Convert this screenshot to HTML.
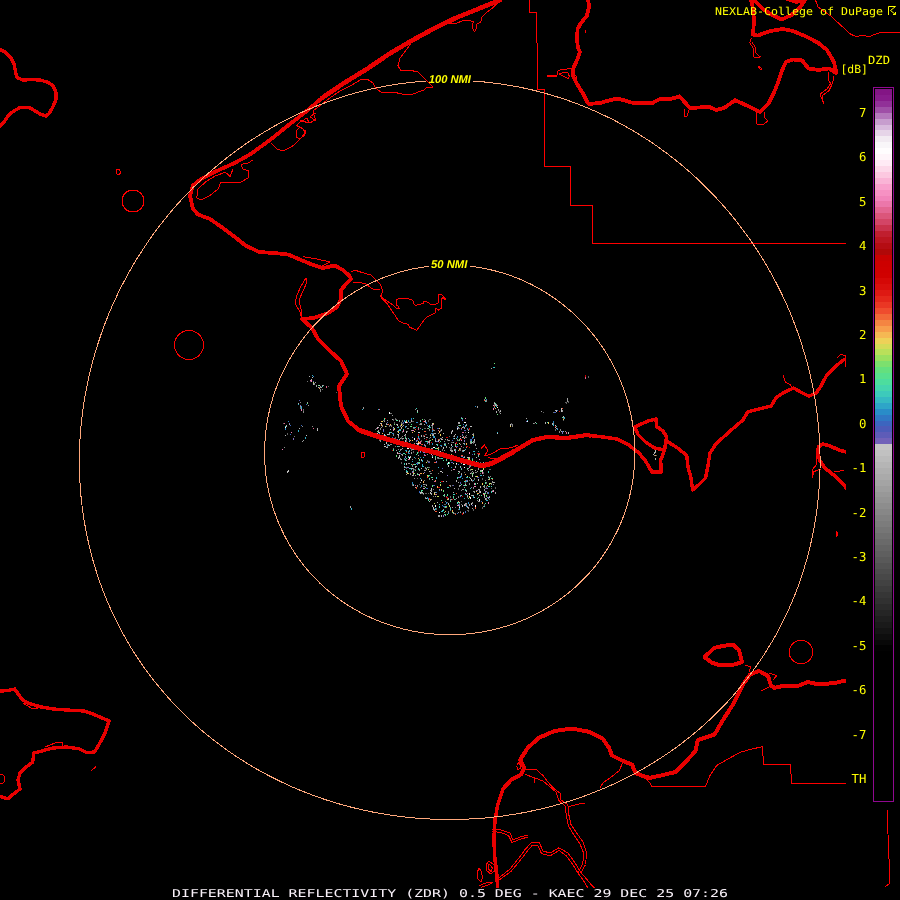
<!DOCTYPE html>
<html><head><meta charset="utf-8"><title>DIFFERENTIAL REFLECTIVITY (ZDR)</title>
<style>
html,body{margin:0;padding:0;background:#000;overflow:hidden}
svg{display:block}
text{font-family:"DejaVu Sans Mono","Liberation Mono",monospace;text-rendering:geometricPrecision;shape-rendering:crispEdges}
svg{will-change:transform}
.lab{font-size:12.3px;fill:#ffff00}
.ring{font-family:"Liberation Sans",sans-serif;font-weight:bold;font-style:italic;font-size:11.4px;fill:#ffff00}
</style></head><body>
<svg width="900" height="900" viewBox="0 0 900 900">
<rect width="900" height="900" fill="#000"/>
<g id="speck" shape-rendering="crispEdges">
<rect x="429" y="471" width="2" height="1" fill="#707070"/>
<rect x="429" y="427" width="2" height="1" fill="#30b0c8"/>
<rect x="379" y="432" width="1" height="2" fill="#c0c0c0"/>
<rect x="413" y="474" width="1" height="2" fill="#a0a0a0"/>
<rect x="424" y="470" width="1" height="1" fill="#888888"/>
<rect x="469" y="466" width="1" height="1" fill="#707070"/>
<rect x="422" y="419" width="1" height="1" fill="#68e078"/>
<rect x="495" y="492" width="1" height="2" fill="#a0a0a0"/>
<rect x="384" y="418" width="1" height="2" fill="#50e098"/>
<rect x="465" y="425" width="1" height="2" fill="#30b0c8"/>
<rect x="425" y="434" width="2" height="1" fill="#606060"/>
<rect x="398" y="453" width="1" height="1" fill="#e06088"/>
<rect x="377" y="427" width="2" height="1" fill="#c0c0c0"/>
<rect x="414" y="443" width="1" height="1" fill="#c0c0c0"/>
<rect x="446" y="437" width="2" height="1" fill="#d00000"/>
<rect x="448" y="443" width="1" height="1" fill="#989898"/>
<rect x="424" y="438" width="1" height="1" fill="#888888"/>
<rect x="439" y="515" width="1" height="2" fill="#a0a0a0"/>
<rect x="488" y="486" width="2" height="1" fill="#40d0b8"/>
<rect x="453" y="463" width="1" height="1" fill="#c0c0c0"/>
<rect x="429" y="450" width="1" height="2" fill="#989898"/>
<rect x="462" y="496" width="1" height="1" fill="#d00000"/>
<rect x="459" y="507" width="1" height="1" fill="#ffffff"/>
<rect x="482" y="472" width="1" height="2" fill="#f080b8"/>
<rect x="484" y="489" width="1" height="2" fill="#989898"/>
<rect x="446" y="458" width="2" height="1" fill="#606060"/>
<rect x="433" y="436" width="2" height="1" fill="#50e098"/>
<rect x="456" y="463" width="1" height="2" fill="#a0a0a0"/>
<rect x="402" y="454" width="1" height="2" fill="#989898"/>
<rect x="474" y="491" width="1" height="2" fill="#a0a0a0"/>
<rect x="398" y="426" width="1" height="1" fill="#606060"/>
<rect x="463" y="512" width="1" height="1" fill="#a0a0a0"/>
<rect x="429" y="441" width="1" height="2" fill="#b0b0b0"/>
<rect x="429" y="419" width="2" height="1" fill="#606060"/>
<rect x="445" y="444" width="1" height="2" fill="#40d0b8"/>
<rect x="402" y="426" width="1" height="1" fill="#989898"/>
<rect x="429" y="478" width="1" height="2" fill="#40d0b8"/>
<rect x="468" y="468" width="1" height="1" fill="#a0a0a0"/>
<rect x="471" y="469" width="2" height="1" fill="#c8e058"/>
<rect x="480" y="486" width="1" height="2" fill="#b0b0b0"/>
<rect x="421" y="459" width="1" height="2" fill="#c0c0c0"/>
<rect x="476" y="448" width="1" height="1" fill="#a0a0a0"/>
<rect x="464" y="498" width="1" height="1" fill="#30b0c8"/>
<rect x="403" y="453" width="2" height="1" fill="#888888"/>
<rect x="425" y="441" width="1" height="1" fill="#2888c8"/>
<rect x="440" y="484" width="1" height="2" fill="#c8e058"/>
<rect x="460" y="512" width="1" height="1" fill="#989898"/>
<rect x="469" y="458" width="1" height="2" fill="#f8a850"/>
<rect x="457" y="513" width="1" height="1" fill="#3868c0"/>
<rect x="410" y="426" width="2" height="1" fill="#68e078"/>
<rect x="383" y="429" width="1" height="2" fill="#8070c0"/>
<rect x="489" y="496" width="1" height="2" fill="#a0a0a0"/>
<rect x="435" y="448" width="2" height="1" fill="#50e098"/>
<rect x="412" y="432" width="1" height="1" fill="#68e078"/>
<rect x="376" y="428" width="1" height="1" fill="#888888"/>
<rect x="464" y="437" width="1" height="2" fill="#b0b0b0"/>
<rect x="446" y="502" width="1" height="2" fill="#2888c8"/>
<rect x="439" y="458" width="2" height="1" fill="#707070"/>
<rect x="392" y="433" width="2" height="1" fill="#2888c8"/>
<rect x="489" y="478" width="1" height="1" fill="#a0a0a0"/>
<rect x="449" y="506" width="1" height="1" fill="#606060"/>
<rect x="405" y="422" width="2" height="1" fill="#ffffff"/>
<rect x="423" y="484" width="2" height="1" fill="#a0a0a0"/>
<rect x="459" y="508" width="1" height="2" fill="#30b0c8"/>
<rect x="436" y="492" width="1" height="1" fill="#2888c8"/>
<rect x="469" y="477" width="1" height="1" fill="#50e098"/>
<rect x="396" y="424" width="1" height="1" fill="#a0a0a0"/>
<rect x="431" y="493" width="1" height="2" fill="#b0b0b0"/>
<rect x="437" y="457" width="1" height="1" fill="#989898"/>
<rect x="430" y="490" width="2" height="1" fill="#a0a0a0"/>
<rect x="474" y="486" width="2" height="1" fill="#f080b8"/>
<rect x="448" y="465" width="1" height="2" fill="#c0c0c0"/>
<rect x="467" y="428" width="1" height="1" fill="#2888c8"/>
<rect x="484" y="485" width="1" height="2" fill="#50e098"/>
<rect x="398" y="431" width="1" height="2" fill="#f0d058"/>
<rect x="399" y="455" width="1" height="2" fill="#c0c0c0"/>
<rect x="385" y="437" width="1" height="1" fill="#707070"/>
<rect x="469" y="480" width="1" height="1" fill="#888888"/>
<rect x="407" y="448" width="2" height="1" fill="#ffffff"/>
<rect x="453" y="497" width="1" height="2" fill="#707070"/>
<rect x="432" y="429" width="2" height="1" fill="#707070"/>
<rect x="425" y="467" width="1" height="2" fill="#888888"/>
<rect x="463" y="443" width="2" height="1" fill="#a0a0a0"/>
<rect x="377" y="428" width="1" height="1" fill="#f080b8"/>
<rect x="486" y="491" width="1" height="1" fill="#989898"/>
<rect x="426" y="462" width="1" height="1" fill="#707070"/>
<rect x="491" y="488" width="1" height="1" fill="#606060"/>
<rect x="446" y="456" width="1" height="1" fill="#2888c8"/>
<rect x="465" y="437" width="2" height="1" fill="#888888"/>
<rect x="451" y="450" width="1" height="2" fill="#989898"/>
<rect x="468" y="432" width="1" height="1" fill="#989898"/>
<rect x="379" y="440" width="1" height="1" fill="#707070"/>
<rect x="381" y="421" width="1" height="1" fill="#f8a850"/>
<rect x="452" y="451" width="1" height="1" fill="#a0a0a0"/>
<rect x="426" y="439" width="1" height="1" fill="#d00000"/>
<rect x="413" y="470" width="1" height="2" fill="#50e098"/>
<rect x="413" y="469" width="1" height="2" fill="#707070"/>
<rect x="476" y="461" width="1" height="1" fill="#40d0b8"/>
<rect x="449" y="485" width="1" height="1" fill="#f05030"/>
<rect x="456" y="446" width="1" height="2" fill="#f05030"/>
<rect x="428" y="475" width="1" height="2" fill="#68e078"/>
<rect x="430" y="435" width="1" height="1" fill="#c8e058"/>
<rect x="446" y="496" width="1" height="2" fill="#d00000"/>
<rect x="441" y="500" width="1" height="1" fill="#50e098"/>
<rect x="469" y="505" width="1" height="1" fill="#c0c0c0"/>
<rect x="467" y="480" width="1" height="2" fill="#a0a0a0"/>
<rect x="469" y="467" width="1" height="1" fill="#f080b8"/>
<rect x="458" y="464" width="1" height="1" fill="#3868c0"/>
<rect x="457" y="502" width="1" height="2" fill="#40d0b8"/>
<rect x="439" y="487" width="1" height="1" fill="#b0b0b0"/>
<rect x="403" y="429" width="1" height="1" fill="#50e098"/>
<rect x="398" y="457" width="1" height="2" fill="#c0c0c0"/>
<rect x="411" y="424" width="1" height="1" fill="#50e098"/>
<rect x="433" y="496" width="1" height="1" fill="#a0a0a0"/>
<rect x="417" y="474" width="2" height="1" fill="#50e098"/>
<rect x="437" y="458" width="1" height="1" fill="#606060"/>
<rect x="452" y="511" width="1" height="2" fill="#68e078"/>
<rect x="415" y="470" width="1" height="1" fill="#50e098"/>
<rect x="423" y="435" width="1" height="2" fill="#606060"/>
<rect x="471" y="495" width="1" height="1" fill="#a0a0a0"/>
<rect x="429" y="438" width="1" height="1" fill="#606060"/>
<rect x="425" y="493" width="2" height="1" fill="#606060"/>
<rect x="391" y="425" width="1" height="2" fill="#707070"/>
<rect x="439" y="506" width="1" height="2" fill="#40d0b8"/>
<rect x="447" y="502" width="1" height="1" fill="#606060"/>
<rect x="439" y="428" width="1" height="1" fill="#f0d058"/>
<rect x="411" y="420" width="1" height="2" fill="#b0b0b0"/>
<rect x="463" y="450" width="1" height="2" fill="#30b0c8"/>
<rect x="422" y="460" width="1" height="2" fill="#30b0c8"/>
<rect x="481" y="501" width="1" height="1" fill="#3868c0"/>
<rect x="409" y="451" width="1" height="1" fill="#f0d058"/>
<rect x="468" y="470" width="1" height="1" fill="#a0a0a0"/>
<rect x="420" y="423" width="2" height="1" fill="#888888"/>
<rect x="432" y="479" width="1" height="1" fill="#c0c0c0"/>
<rect x="452" y="430" width="1" height="2" fill="#c0c0c0"/>
<rect x="401" y="428" width="1" height="1" fill="#b0b0b0"/>
<rect x="398" y="427" width="1" height="1" fill="#50e098"/>
<rect x="489" y="478" width="1" height="2" fill="#3868c0"/>
<rect x="439" y="439" width="1" height="2" fill="#888888"/>
<rect x="414" y="443" width="1" height="1" fill="#989898"/>
<rect x="404" y="469" width="1" height="1" fill="#a0a0a0"/>
<rect x="467" y="507" width="1" height="1" fill="#a0a0a0"/>
<rect x="459" y="450" width="1" height="1" fill="#d00000"/>
<rect x="492" y="481" width="1" height="2" fill="#989898"/>
<rect x="488" y="477" width="1" height="1" fill="#40d0b8"/>
<rect x="438" y="439" width="1" height="1" fill="#f05030"/>
<rect x="457" y="427" width="1" height="1" fill="#3868c0"/>
<rect x="432" y="455" width="1" height="2" fill="#e06088"/>
<rect x="468" y="463" width="1" height="2" fill="#ffffff"/>
<rect x="387" y="424" width="2" height="1" fill="#f05030"/>
<rect x="450" y="457" width="1" height="1" fill="#606060"/>
<rect x="484" y="504" width="1" height="2" fill="#606060"/>
<rect x="441" y="481" width="2" height="1" fill="#d00000"/>
<rect x="425" y="497" width="1" height="2" fill="#989898"/>
<rect x="444" y="507" width="1" height="1" fill="#606060"/>
<rect x="403" y="443" width="1" height="2" fill="#c0c0c0"/>
<rect x="486" y="498" width="1" height="2" fill="#888888"/>
<rect x="411" y="464" width="1" height="1" fill="#50e098"/>
<rect x="453" y="485" width="1" height="1" fill="#5058b8"/>
<rect x="455" y="444" width="1" height="2" fill="#68e078"/>
<rect x="463" y="426" width="1" height="2" fill="#8070c0"/>
<rect x="382" y="435" width="1" height="2" fill="#989898"/>
<rect x="397" y="431" width="1" height="1" fill="#989898"/>
<rect x="473" y="451" width="2" height="1" fill="#30b0c8"/>
<rect x="438" y="515" width="1" height="2" fill="#50e098"/>
<rect x="400" y="426" width="1" height="1" fill="#8070c0"/>
<rect x="428" y="467" width="2" height="1" fill="#707070"/>
<rect x="408" y="438" width="1" height="1" fill="#40d0b8"/>
<rect x="403" y="441" width="1" height="1" fill="#50e098"/>
<rect x="431" y="491" width="1" height="1" fill="#b0b0b0"/>
<rect x="454" y="450" width="2" height="1" fill="#30b0c8"/>
<rect x="467" y="468" width="1" height="1" fill="#50e098"/>
<rect x="449" y="436" width="1" height="1" fill="#606060"/>
<rect x="472" y="495" width="2" height="1" fill="#b0b0b0"/>
<rect x="448" y="487" width="1" height="1" fill="#50e098"/>
<rect x="435" y="458" width="1" height="1" fill="#606060"/>
<rect x="390" y="444" width="2" height="1" fill="#888888"/>
<rect x="466" y="494" width="1" height="1" fill="#50e098"/>
<rect x="455" y="466" width="1" height="2" fill="#b0b0b0"/>
<rect x="412" y="461" width="1" height="1" fill="#30b0c8"/>
<rect x="434" y="492" width="2" height="1" fill="#b0b0b0"/>
<rect x="410" y="456" width="1" height="2" fill="#c0c0c0"/>
<rect x="465" y="436" width="1" height="1" fill="#707070"/>
<rect x="425" y="421" width="1" height="1" fill="#888888"/>
<rect x="399" y="429" width="1" height="2" fill="#30b0c8"/>
<rect x="415" y="485" width="1" height="1" fill="#e06088"/>
<rect x="431" y="453" width="1" height="2" fill="#f080b8"/>
<rect x="472" y="434" width="2" height="1" fill="#a0a0a0"/>
<rect x="474" y="462" width="1" height="2" fill="#707070"/>
<rect x="469" y="462" width="1" height="2" fill="#989898"/>
<rect x="451" y="467" width="1" height="1" fill="#2888c8"/>
<rect x="385" y="418" width="1" height="1" fill="#d00000"/>
<rect x="470" y="488" width="1" height="1" fill="#40d0b8"/>
<rect x="479" y="459" width="1" height="1" fill="#f080b8"/>
<rect x="457" y="444" width="1" height="1" fill="#50e098"/>
<rect x="388" y="434" width="2" height="1" fill="#b0b0b0"/>
<rect x="460" y="466" width="1" height="2" fill="#b0b0b0"/>
<rect x="478" y="468" width="1" height="2" fill="#a0a0a0"/>
<rect x="438" y="449" width="1" height="1" fill="#888888"/>
<rect x="480" y="491" width="1" height="2" fill="#c0c0c0"/>
<rect x="460" y="482" width="1" height="2" fill="#5058b8"/>
<rect x="434" y="510" width="1" height="1" fill="#989898"/>
<rect x="416" y="487" width="1" height="2" fill="#f05030"/>
<rect x="474" y="462" width="2" height="1" fill="#606060"/>
<rect x="406" y="451" width="1" height="2" fill="#f0d058"/>
<rect x="464" y="505" width="1" height="1" fill="#c0c0c0"/>
<rect x="413" y="451" width="1" height="2" fill="#606060"/>
<rect x="485" y="480" width="1" height="1" fill="#888888"/>
<rect x="399" y="420" width="1" height="2" fill="#707070"/>
<rect x="459" y="440" width="1" height="1" fill="#b0b0b0"/>
<rect x="391" y="432" width="1" height="1" fill="#989898"/>
<rect x="435" y="480" width="1" height="2" fill="#f8a850"/>
<rect x="461" y="484" width="1" height="1" fill="#50e098"/>
<rect x="419" y="442" width="1" height="2" fill="#f8a850"/>
<rect x="402" y="438" width="2" height="1" fill="#a0a0a0"/>
<rect x="466" y="505" width="1" height="2" fill="#30b0c8"/>
<rect x="451" y="455" width="2" height="1" fill="#b0b0b0"/>
<rect x="466" y="485" width="1" height="1" fill="#989898"/>
<rect x="419" y="484" width="1" height="1" fill="#606060"/>
<rect x="479" y="499" width="1" height="2" fill="#ffffff"/>
<rect x="462" y="478" width="1" height="1" fill="#2888c8"/>
<rect x="420" y="482" width="1" height="1" fill="#a0a0a0"/>
<rect x="432" y="485" width="1" height="2" fill="#68e078"/>
<rect x="406" y="438" width="1" height="2" fill="#f080b8"/>
<rect x="463" y="424" width="1" height="1" fill="#888888"/>
<rect x="387" y="446" width="1" height="2" fill="#707070"/>
<rect x="393" y="419" width="1" height="2" fill="#606060"/>
<rect x="408" y="453" width="2" height="1" fill="#2888c8"/>
<rect x="421" y="485" width="1" height="2" fill="#2888c8"/>
<rect x="394" y="423" width="1" height="2" fill="#68e078"/>
<rect x="427" y="428" width="2" height="1" fill="#68e078"/>
<rect x="444" y="441" width="1" height="1" fill="#888888"/>
<rect x="382" y="433" width="1" height="1" fill="#f8a850"/>
<rect x="469" y="483" width="1" height="2" fill="#888888"/>
<rect x="450" y="499" width="1" height="1" fill="#a0a0a0"/>
<rect x="428" y="500" width="1" height="1" fill="#50e098"/>
<rect x="458" y="440" width="1" height="1" fill="#707070"/>
<rect x="405" y="437" width="1" height="2" fill="#50e098"/>
<rect x="411" y="468" width="1" height="2" fill="#30b0c8"/>
<rect x="423" y="486" width="1" height="1" fill="#707070"/>
<rect x="436" y="441" width="1" height="1" fill="#8070c0"/>
<rect x="411" y="419" width="1" height="1" fill="#3868c0"/>
<rect x="405" y="434" width="1" height="2" fill="#c0c0c0"/>
<rect x="388" y="444" width="1" height="1" fill="#888888"/>
<rect x="479" y="492" width="1" height="1" fill="#a0a0a0"/>
<rect x="446" y="446" width="1" height="2" fill="#a0a0a0"/>
<rect x="424" y="486" width="1" height="1" fill="#888888"/>
<rect x="458" y="512" width="1" height="1" fill="#a0a0a0"/>
<rect x="465" y="482" width="1" height="1" fill="#30b0c8"/>
<rect x="450" y="448" width="1" height="2" fill="#989898"/>
<rect x="466" y="490" width="1" height="2" fill="#b0b0b0"/>
<rect x="479" y="465" width="2" height="1" fill="#707070"/>
<rect x="413" y="468" width="1" height="2" fill="#888888"/>
<rect x="451" y="431" width="1" height="2" fill="#707070"/>
<rect x="468" y="507" width="1" height="2" fill="#a0a0a0"/>
<rect x="386" y="423" width="1" height="1" fill="#888888"/>
<rect x="415" y="466" width="2" height="1" fill="#a0a0a0"/>
<rect x="402" y="423" width="1" height="2" fill="#606060"/>
<rect x="408" y="456" width="1" height="2" fill="#40d0b8"/>
<rect x="450" y="507" width="1" height="1" fill="#989898"/>
<rect x="440" y="445" width="2" height="1" fill="#2888c8"/>
<rect x="415" y="445" width="1" height="2" fill="#68e078"/>
<rect x="431" y="425" width="2" height="1" fill="#888888"/>
<rect x="451" y="444" width="1" height="2" fill="#c0c0c0"/>
<rect x="483" y="493" width="1" height="2" fill="#c0c0c0"/>
<rect x="406" y="451" width="1" height="2" fill="#68e078"/>
<rect x="389" y="425" width="1" height="2" fill="#707070"/>
<rect x="454" y="435" width="1" height="2" fill="#a0a0a0"/>
<rect x="424" y="435" width="1" height="2" fill="#d00000"/>
<rect x="414" y="473" width="1" height="1" fill="#68e078"/>
<rect x="419" y="474" width="1" height="2" fill="#f080b8"/>
<rect x="407" y="422" width="1" height="1" fill="#e06088"/>
<rect x="418" y="451" width="1" height="1" fill="#d00000"/>
<rect x="457" y="428" width="1" height="2" fill="#a0a0a0"/>
<rect x="436" y="462" width="1" height="1" fill="#a0a0a0"/>
<rect x="478" y="480" width="1" height="1" fill="#30b0c8"/>
<rect x="478" y="466" width="1" height="1" fill="#606060"/>
<rect x="461" y="495" width="1" height="1" fill="#50e098"/>
<rect x="427" y="428" width="1" height="1" fill="#888888"/>
<rect x="443" y="515" width="1" height="1" fill="#30b0c8"/>
<rect x="380" y="437" width="2" height="1" fill="#c8e058"/>
<rect x="411" y="449" width="1" height="2" fill="#707070"/>
<rect x="385" y="426" width="1" height="1" fill="#c8e058"/>
<rect x="495" y="487" width="1" height="1" fill="#606060"/>
<rect x="420" y="443" width="1" height="1" fill="#f080b8"/>
<rect x="435" y="508" width="1" height="2" fill="#30b0c8"/>
<rect x="425" y="420" width="1" height="2" fill="#c0c0c0"/>
<rect x="434" y="481" width="2" height="1" fill="#e06088"/>
<rect x="452" y="440" width="1" height="1" fill="#5058b8"/>
<rect x="421" y="480" width="1" height="1" fill="#c0c0c0"/>
<rect x="411" y="468" width="2" height="1" fill="#b0b0b0"/>
<rect x="438" y="467" width="1" height="1" fill="#30b0c8"/>
<rect x="460" y="449" width="1" height="2" fill="#707070"/>
<rect x="419" y="443" width="1" height="1" fill="#e06088"/>
<rect x="412" y="464" width="1" height="1" fill="#d00000"/>
<rect x="447" y="497" width="1" height="2" fill="#d00000"/>
<rect x="400" y="438" width="1" height="1" fill="#a0a0a0"/>
<rect x="472" y="480" width="1" height="2" fill="#606060"/>
<rect x="442" y="510" width="2" height="1" fill="#40d0b8"/>
<rect x="491" y="491" width="1" height="2" fill="#40d0b8"/>
<rect x="433" y="447" width="1" height="1" fill="#40d0b8"/>
<rect x="472" y="458" width="1" height="2" fill="#f080b8"/>
<rect x="458" y="496" width="1" height="2" fill="#989898"/>
<rect x="381" y="424" width="1" height="2" fill="#f8a850"/>
<rect x="386" y="424" width="2" height="1" fill="#989898"/>
<rect x="384" y="446" width="1" height="1" fill="#c0c0c0"/>
<rect x="483" y="462" width="1" height="2" fill="#b0b0b0"/>
<rect x="435" y="458" width="1" height="1" fill="#50e098"/>
<rect x="442" y="502" width="1" height="1" fill="#f05030"/>
<rect x="455" y="451" width="1" height="2" fill="#f080b8"/>
<rect x="445" y="501" width="1" height="1" fill="#707070"/>
<rect x="413" y="485" width="1" height="1" fill="#888888"/>
<rect x="420" y="487" width="1" height="1" fill="#707070"/>
<rect x="443" y="515" width="1" height="2" fill="#8070c0"/>
<rect x="434" y="436" width="1" height="2" fill="#30b0c8"/>
<rect x="469" y="497" width="1" height="1" fill="#606060"/>
<rect x="399" y="433" width="1" height="1" fill="#3868c0"/>
<rect x="446" y="507" width="1" height="1" fill="#f05030"/>
<rect x="475" y="476" width="1" height="1" fill="#68e078"/>
<rect x="440" y="438" width="2" height="1" fill="#888888"/>
<rect x="406" y="442" width="1" height="1" fill="#707070"/>
<rect x="482" y="502" width="1" height="2" fill="#f8a850"/>
<rect x="461" y="474" width="1" height="1" fill="#b0b0b0"/>
<rect x="459" y="448" width="2" height="1" fill="#989898"/>
<rect x="442" y="472" width="1" height="1" fill="#c0c0c0"/>
<rect x="396" y="450" width="1" height="1" fill="#a0a0a0"/>
<rect x="493" y="482" width="2" height="1" fill="#b0b0b0"/>
<rect x="460" y="476" width="1" height="2" fill="#30b0c8"/>
<rect x="389" y="432" width="2" height="1" fill="#40d0b8"/>
<rect x="404" y="435" width="2" height="1" fill="#a0a0a0"/>
<rect x="450" y="510" width="1" height="1" fill="#707070"/>
<rect x="460" y="467" width="1" height="1" fill="#40d0b8"/>
<rect x="399" y="453" width="1" height="1" fill="#888888"/>
<rect x="400" y="453" width="1" height="1" fill="#5058b8"/>
<rect x="464" y="467" width="1" height="1" fill="#ffffff"/>
<rect x="397" y="434" width="1" height="1" fill="#a0a0a0"/>
<rect x="411" y="418" width="1" height="2" fill="#2888c8"/>
<rect x="457" y="436" width="1" height="2" fill="#2888c8"/>
<rect x="488" y="471" width="1" height="2" fill="#40d0b8"/>
<rect x="392" y="419" width="1" height="1" fill="#b0b0b0"/>
<rect x="463" y="512" width="1" height="2" fill="#a0a0a0"/>
<rect x="458" y="505" width="1" height="1" fill="#8070c0"/>
<rect x="419" y="424" width="1" height="1" fill="#606060"/>
<rect x="458" y="425" width="1" height="1" fill="#707070"/>
<rect x="407" y="467" width="2" height="1" fill="#8070c0"/>
<rect x="405" y="421" width="1" height="1" fill="#40d0b8"/>
<rect x="491" y="483" width="1" height="2" fill="#888888"/>
<rect x="444" y="443" width="1" height="2" fill="#3868c0"/>
<rect x="458" y="458" width="1" height="1" fill="#f0d058"/>
<rect x="415" y="429" width="1" height="1" fill="#f05030"/>
<rect x="480" y="471" width="2" height="1" fill="#68e078"/>
<rect x="467" y="429" width="2" height="1" fill="#707070"/>
<rect x="450" y="457" width="1" height="1" fill="#b0b0b0"/>
<rect x="458" y="477" width="2" height="1" fill="#8070c0"/>
<rect x="443" y="509" width="1" height="1" fill="#f05030"/>
<rect x="443" y="454" width="1" height="1" fill="#989898"/>
<rect x="433" y="423" width="1" height="2" fill="#c8e058"/>
<rect x="435" y="440" width="1" height="2" fill="#e06088"/>
<rect x="412" y="482" width="1" height="2" fill="#2888c8"/>
<rect x="489" y="484" width="1" height="1" fill="#68e078"/>
<rect x="450" y="508" width="1" height="2" fill="#40d0b8"/>
<rect x="392" y="439" width="1" height="1" fill="#b0b0b0"/>
<rect x="471" y="439" width="1" height="2" fill="#2888c8"/>
<rect x="465" y="418" width="1" height="1" fill="#f080b8"/>
<rect x="444" y="512" width="1" height="1" fill="#50e098"/>
<rect x="421" y="449" width="1" height="2" fill="#a0a0a0"/>
<rect x="473" y="436" width="1" height="2" fill="#30b0c8"/>
<rect x="385" y="446" width="1" height="1" fill="#c0c0c0"/>
<rect x="385" y="435" width="1" height="1" fill="#40d0b8"/>
<rect x="439" y="442" width="1" height="1" fill="#d00000"/>
<rect x="427" y="454" width="1" height="1" fill="#888888"/>
<rect x="439" y="512" width="1" height="1" fill="#ffffff"/>
<rect x="424" y="436" width="1" height="1" fill="#c0c0c0"/>
<rect x="426" y="462" width="1" height="1" fill="#c8e058"/>
<rect x="383" y="431" width="1" height="1" fill="#3868c0"/>
<rect x="472" y="473" width="1" height="2" fill="#68e078"/>
<rect x="431" y="477" width="2" height="1" fill="#50e098"/>
<rect x="472" y="437" width="1" height="2" fill="#5058b8"/>
<rect x="423" y="452" width="2" height="1" fill="#8070c0"/>
<rect x="481" y="463" width="1" height="2" fill="#f05030"/>
<rect x="387" y="444" width="1" height="2" fill="#606060"/>
<rect x="437" y="455" width="1" height="1" fill="#68e078"/>
<rect x="473" y="487" width="1" height="2" fill="#888888"/>
<rect x="427" y="460" width="1" height="1" fill="#707070"/>
<rect x="424" y="444" width="1" height="2" fill="#8070c0"/>
<rect x="432" y="505" width="1" height="2" fill="#b0b0b0"/>
<rect x="472" y="454" width="1" height="1" fill="#5058b8"/>
<rect x="430" y="434" width="1" height="1" fill="#707070"/>
<rect x="415" y="487" width="1" height="1" fill="#b0b0b0"/>
<rect x="470" y="439" width="1" height="2" fill="#5058b8"/>
<rect x="467" y="457" width="1" height="1" fill="#c0c0c0"/>
<rect x="479" y="453" width="1" height="2" fill="#f05030"/>
<rect x="418" y="462" width="2" height="1" fill="#989898"/>
<rect x="424" y="428" width="2" height="1" fill="#606060"/>
<rect x="486" y="482" width="1" height="2" fill="#606060"/>
<rect x="458" y="422" width="2" height="1" fill="#b0b0b0"/>
<rect x="409" y="457" width="1" height="1" fill="#c0c0c0"/>
<rect x="441" y="429" width="1" height="2" fill="#a0a0a0"/>
<rect x="462" y="427" width="1" height="1" fill="#c8e058"/>
<rect x="441" y="454" width="1" height="1" fill="#3868c0"/>
<rect x="488" y="479" width="1" height="1" fill="#a0a0a0"/>
<rect x="414" y="478" width="1" height="1" fill="#888888"/>
<rect x="475" y="507" width="1" height="1" fill="#f05030"/>
<rect x="428" y="498" width="2" height="1" fill="#3868c0"/>
<rect x="415" y="458" width="1" height="1" fill="#606060"/>
<rect x="489" y="483" width="2" height="1" fill="#888888"/>
<rect x="462" y="434" width="1" height="2" fill="#5058b8"/>
<rect x="418" y="436" width="1" height="2" fill="#30b0c8"/>
<rect x="467" y="493" width="1" height="1" fill="#e06088"/>
<rect x="448" y="503" width="1" height="2" fill="#c0c0c0"/>
<rect x="394" y="440" width="1" height="1" fill="#f05030"/>
<rect x="431" y="442" width="1" height="1" fill="#d00000"/>
<rect x="418" y="438" width="1" height="1" fill="#888888"/>
<rect x="447" y="440" width="1" height="1" fill="#606060"/>
<rect x="485" y="491" width="1" height="2" fill="#8070c0"/>
<rect x="463" y="437" width="2" height="1" fill="#d00000"/>
<rect x="405" y="459" width="1" height="1" fill="#5058b8"/>
<rect x="451" y="442" width="2" height="1" fill="#606060"/>
<rect x="459" y="485" width="2" height="1" fill="#b0b0b0"/>
<rect x="442" y="505" width="1" height="1" fill="#2888c8"/>
<rect x="414" y="457" width="1" height="1" fill="#30b0c8"/>
<rect x="421" y="479" width="1" height="2" fill="#707070"/>
<rect x="462" y="419" width="1" height="2" fill="#5058b8"/>
<rect x="435" y="511" width="2" height="1" fill="#f05030"/>
<rect x="489" y="477" width="1" height="2" fill="#989898"/>
<rect x="490" y="476" width="1" height="1" fill="#888888"/>
<rect x="438" y="515" width="1" height="2" fill="#a0a0a0"/>
<rect x="400" y="429" width="1" height="2" fill="#989898"/>
<rect x="389" y="433" width="1" height="2" fill="#a0a0a0"/>
<rect x="475" y="507" width="1" height="2" fill="#f05030"/>
<rect x="459" y="503" width="1" height="2" fill="#606060"/>
<rect x="395" y="437" width="1" height="2" fill="#606060"/>
<rect x="457" y="478" width="1" height="1" fill="#50e098"/>
<rect x="421" y="468" width="1" height="1" fill="#c0c0c0"/>
<rect x="414" y="427" width="1" height="1" fill="#3868c0"/>
<rect x="456" y="480" width="1" height="2" fill="#b0b0b0"/>
<rect x="421" y="435" width="1" height="2" fill="#b0b0b0"/>
<rect x="392" y="450" width="1" height="1" fill="#d00000"/>
<rect x="390" y="429" width="1" height="1" fill="#c0c0c0"/>
<rect x="480" y="475" width="2" height="1" fill="#30b0c8"/>
<rect x="386" y="442" width="1" height="2" fill="#c0c0c0"/>
<rect x="393" y="429" width="1" height="2" fill="#f080b8"/>
<rect x="437" y="453" width="2" height="1" fill="#c0c0c0"/>
<rect x="472" y="502" width="1" height="2" fill="#888888"/>
<rect x="462" y="451" width="1" height="1" fill="#30b0c8"/>
<rect x="408" y="443" width="1" height="2" fill="#30b0c8"/>
<rect x="465" y="480" width="1" height="1" fill="#f05030"/>
<rect x="466" y="503" width="1" height="2" fill="#707070"/>
<rect x="445" y="506" width="1" height="2" fill="#50e098"/>
<rect x="406" y="472" width="2" height="1" fill="#b0b0b0"/>
<rect x="455" y="458" width="1" height="2" fill="#707070"/>
<rect x="405" y="450" width="2" height="1" fill="#2888c8"/>
<rect x="443" y="447" width="1" height="2" fill="#c0c0c0"/>
<rect x="463" y="436" width="1" height="2" fill="#989898"/>
<rect x="425" y="445" width="1" height="2" fill="#888888"/>
<rect x="466" y="461" width="1" height="2" fill="#2888c8"/>
<rect x="430" y="499" width="1" height="2" fill="#f8a850"/>
<rect x="375" y="429" width="1" height="1" fill="#707070"/>
<rect x="465" y="505" width="1" height="1" fill="#e06088"/>
<rect x="482" y="483" width="1" height="2" fill="#f0d058"/>
<rect x="471" y="479" width="1" height="2" fill="#c0c0c0"/>
<rect x="432" y="439" width="1" height="1" fill="#c8e058"/>
<rect x="473" y="442" width="1" height="2" fill="#707070"/>
<rect x="474" y="453" width="1" height="2" fill="#50e098"/>
<rect x="459" y="502" width="1" height="1" fill="#c0c0c0"/>
<rect x="461" y="468" width="1" height="1" fill="#8070c0"/>
<rect x="401" y="427" width="1" height="1" fill="#f0d058"/>
<rect x="393" y="427" width="1" height="2" fill="#c0c0c0"/>
<rect x="414" y="431" width="1" height="1" fill="#f0d058"/>
<rect x="414" y="427" width="2" height="1" fill="#30b0c8"/>
<rect x="473" y="433" width="1" height="1" fill="#707070"/>
<rect x="432" y="443" width="1" height="2" fill="#2888c8"/>
<rect x="395" y="418" width="1" height="1" fill="#606060"/>
<rect x="480" y="466" width="1" height="1" fill="#f0d058"/>
<rect x="483" y="475" width="1" height="1" fill="#a0a0a0"/>
<rect x="458" y="504" width="1" height="2" fill="#5058b8"/>
<rect x="401" y="437" width="1" height="2" fill="#606060"/>
<rect x="434" y="433" width="2" height="1" fill="#a0a0a0"/>
<rect x="461" y="475" width="1" height="2" fill="#3868c0"/>
<rect x="424" y="480" width="1" height="1" fill="#888888"/>
<rect x="454" y="449" width="1" height="1" fill="#606060"/>
<rect x="474" y="483" width="1" height="2" fill="#f080b8"/>
<rect x="454" y="438" width="1" height="1" fill="#c0c0c0"/>
<rect x="420" y="424" width="2" height="1" fill="#989898"/>
<rect x="417" y="462" width="1" height="2" fill="#888888"/>
<rect x="475" y="444" width="1" height="2" fill="#a0a0a0"/>
<rect x="444" y="494" width="1" height="1" fill="#b0b0b0"/>
<rect x="442" y="437" width="1" height="1" fill="#b0b0b0"/>
<rect x="412" y="466" width="1" height="1" fill="#888888"/>
<rect x="483" y="472" width="1" height="2" fill="#606060"/>
<rect x="384" y="421" width="1" height="1" fill="#a0a0a0"/>
<rect x="469" y="480" width="1" height="1" fill="#606060"/>
<rect x="457" y="428" width="2" height="1" fill="#ffffff"/>
<rect x="467" y="506" width="1" height="1" fill="#8070c0"/>
<rect x="476" y="491" width="1" height="1" fill="#f0d058"/>
<rect x="428" y="461" width="2" height="1" fill="#606060"/>
<rect x="438" y="433" width="1" height="1" fill="#888888"/>
<rect x="458" y="423" width="2" height="1" fill="#a0a0a0"/>
<rect x="420" y="428" width="1" height="1" fill="#8070c0"/>
<rect x="461" y="504" width="1" height="1" fill="#707070"/>
<rect x="454" y="450" width="1" height="1" fill="#c0c0c0"/>
<rect x="432" y="425" width="1" height="1" fill="#a0a0a0"/>
<rect x="454" y="488" width="1" height="1" fill="#b0b0b0"/>
<rect x="431" y="451" width="1" height="2" fill="#989898"/>
<rect x="461" y="428" width="1" height="1" fill="#e06088"/>
<rect x="486" y="482" width="1" height="1" fill="#888888"/>
<rect x="382" y="435" width="1" height="1" fill="#606060"/>
<rect x="451" y="447" width="1" height="1" fill="#888888"/>
<rect x="428" y="493" width="1" height="1" fill="#606060"/>
<rect x="397" y="452" width="1" height="2" fill="#c0c0c0"/>
<rect x="410" y="448" width="1" height="1" fill="#30b0c8"/>
<rect x="412" y="421" width="2" height="1" fill="#606060"/>
<rect x="488" y="497" width="2" height="1" fill="#c0c0c0"/>
<rect x="424" y="454" width="1" height="1" fill="#8070c0"/>
<rect x="435" y="494" width="2" height="1" fill="#888888"/>
<rect x="440" y="451" width="1" height="1" fill="#c0c0c0"/>
<rect x="446" y="496" width="1" height="1" fill="#707070"/>
<rect x="392" y="437" width="1" height="1" fill="#3868c0"/>
<rect x="421" y="440" width="1" height="2" fill="#606060"/>
<rect x="486" y="488" width="2" height="1" fill="#8070c0"/>
<rect x="486" y="500" width="2" height="1" fill="#30b0c8"/>
<rect x="440" y="471" width="2" height="1" fill="#c0c0c0"/>
<rect x="484" y="494" width="1" height="2" fill="#c0c0c0"/>
<rect x="462" y="489" width="2" height="1" fill="#989898"/>
<rect x="403" y="430" width="1" height="2" fill="#f080b8"/>
<rect x="386" y="447" width="2" height="1" fill="#b0b0b0"/>
<rect x="427" y="475" width="1" height="1" fill="#c8e058"/>
<rect x="462" y="432" width="2" height="1" fill="#50e098"/>
<rect x="387" y="420" width="1" height="1" fill="#f8a850"/>
<rect x="428" y="441" width="1" height="2" fill="#e06088"/>
<rect x="488" y="492" width="1" height="2" fill="#3868c0"/>
<rect x="461" y="490" width="1" height="1" fill="#888888"/>
<rect x="461" y="455" width="2" height="1" fill="#f05030"/>
<rect x="459" y="505" width="1" height="1" fill="#30b0c8"/>
<rect x="422" y="466" width="2" height="1" fill="#30b0c8"/>
<rect x="458" y="482" width="1" height="1" fill="#989898"/>
<rect x="469" y="452" width="1" height="2" fill="#f080b8"/>
<rect x="428" y="499" width="1" height="1" fill="#50e098"/>
<rect x="475" y="483" width="1" height="2" fill="#50e098"/>
<rect x="411" y="430" width="1" height="1" fill="#989898"/>
<rect x="480" y="470" width="2" height="1" fill="#b0b0b0"/>
<rect x="489" y="499" width="1" height="1" fill="#606060"/>
<rect x="413" y="464" width="1" height="1" fill="#a0a0a0"/>
<rect x="413" y="449" width="1" height="1" fill="#f080b8"/>
<rect x="384" y="444" width="1" height="1" fill="#c0c0c0"/>
<rect x="448" y="456" width="1" height="1" fill="#989898"/>
<rect x="445" y="443" width="1" height="1" fill="#707070"/>
<rect x="425" y="484" width="2" height="1" fill="#606060"/>
<rect x="450" y="485" width="1" height="2" fill="#888888"/>
<rect x="411" y="452" width="1" height="2" fill="#a0a0a0"/>
<rect x="428" y="461" width="1" height="1" fill="#888888"/>
<rect x="405" y="435" width="1" height="2" fill="#707070"/>
<rect x="412" y="482" width="1" height="2" fill="#2888c8"/>
<rect x="485" y="498" width="1" height="2" fill="#b0b0b0"/>
<rect x="490" y="483" width="1" height="1" fill="#989898"/>
<rect x="461" y="446" width="1" height="1" fill="#e06088"/>
<rect x="418" y="432" width="2" height="1" fill="#c0c0c0"/>
<rect x="434" y="462" width="2" height="1" fill="#f05030"/>
<rect x="406" y="420" width="1" height="1" fill="#606060"/>
<rect x="424" y="470" width="2" height="1" fill="#a0a0a0"/>
<rect x="427" y="461" width="2" height="1" fill="#707070"/>
<rect x="478" y="489" width="2" height="1" fill="#a0a0a0"/>
<rect x="398" y="457" width="1" height="1" fill="#5058b8"/>
<rect x="417" y="443" width="1" height="2" fill="#c0c0c0"/>
<rect x="403" y="453" width="2" height="1" fill="#40d0b8"/>
<rect x="442" y="468" width="1" height="1" fill="#5058b8"/>
<rect x="437" y="448" width="1" height="1" fill="#c8e058"/>
<rect x="431" y="488" width="1" height="2" fill="#c0c0c0"/>
<rect x="429" y="471" width="1" height="1" fill="#b0b0b0"/>
<rect x="478" y="456" width="1" height="1" fill="#40d0b8"/>
<rect x="446" y="459" width="1" height="2" fill="#50e098"/>
<rect x="485" y="482" width="1" height="2" fill="#50e098"/>
<rect x="478" y="497" width="1" height="1" fill="#888888"/>
<rect x="409" y="457" width="1" height="1" fill="#f0d058"/>
<rect x="476" y="490" width="2" height="1" fill="#8070c0"/>
<rect x="473" y="472" width="1" height="2" fill="#a0a0a0"/>
<rect x="387" y="420" width="1" height="1" fill="#a0a0a0"/>
<rect x="477" y="476" width="1" height="2" fill="#f8a850"/>
<rect x="392" y="441" width="1" height="2" fill="#e06088"/>
<rect x="416" y="422" width="2" height="1" fill="#2888c8"/>
<rect x="380" y="428" width="1" height="2" fill="#888888"/>
<rect x="480" y="466" width="1" height="1" fill="#a0a0a0"/>
<rect x="424" y="421" width="1" height="1" fill="#f080b8"/>
<rect x="454" y="449" width="2" height="1" fill="#a0a0a0"/>
<rect x="439" y="489" width="1" height="1" fill="#a0a0a0"/>
<rect x="467" y="497" width="1" height="1" fill="#707070"/>
<rect x="470" y="473" width="1" height="1" fill="#c0c0c0"/>
<rect x="464" y="430" width="2" height="1" fill="#5058b8"/>
<rect x="422" y="429" width="1" height="1" fill="#40d0b8"/>
<rect x="418" y="458" width="1" height="1" fill="#f8a850"/>
<rect x="458" y="471" width="2" height="1" fill="#c0c0c0"/>
<rect x="382" y="436" width="1" height="1" fill="#a0a0a0"/>
<rect x="396" y="420" width="2" height="1" fill="#50e098"/>
<rect x="465" y="474" width="1" height="1" fill="#f8a850"/>
<rect x="408" y="451" width="1" height="2" fill="#989898"/>
<rect x="442" y="449" width="1" height="2" fill="#707070"/>
<rect x="438" y="447" width="1" height="1" fill="#b0b0b0"/>
<rect x="387" y="445" width="1" height="1" fill="#3868c0"/>
<rect x="472" y="458" width="1" height="2" fill="#3868c0"/>
<rect x="458" y="450" width="1" height="1" fill="#68e078"/>
<rect x="482" y="470" width="1" height="2" fill="#b0b0b0"/>
<rect x="433" y="429" width="1" height="1" fill="#d00000"/>
<rect x="429" y="479" width="1" height="1" fill="#888888"/>
<rect x="432" y="470" width="1" height="1" fill="#f05030"/>
<rect x="406" y="470" width="1" height="2" fill="#30b0c8"/>
<rect x="402" y="448" width="1" height="1" fill="#b0b0b0"/>
<rect x="398" y="436" width="1" height="2" fill="#888888"/>
<rect x="451" y="462" width="2" height="1" fill="#5058b8"/>
<rect x="414" y="438" width="1" height="2" fill="#ffffff"/>
<rect x="459" y="439" width="1" height="2" fill="#68e078"/>
<rect x="423" y="473" width="1" height="1" fill="#f8a850"/>
<rect x="493" y="490" width="1" height="1" fill="#c0c0c0"/>
<rect x="439" y="504" width="1" height="1" fill="#40d0b8"/>
<rect x="413" y="484" width="1" height="2" fill="#b0b0b0"/>
<rect x="477" y="477" width="2" height="1" fill="#5058b8"/>
<rect x="448" y="462" width="1" height="2" fill="#ffffff"/>
<rect x="433" y="433" width="1" height="2" fill="#606060"/>
<rect x="406" y="474" width="1" height="1" fill="#a0a0a0"/>
<rect x="460" y="436" width="1" height="1" fill="#e06088"/>
<rect x="397" y="439" width="1" height="1" fill="#8070c0"/>
<rect x="428" y="469" width="1" height="1" fill="#c8e058"/>
<rect x="465" y="483" width="1" height="2" fill="#c0c0c0"/>
<rect x="423" y="493" width="1" height="1" fill="#b0b0b0"/>
<rect x="430" y="473" width="2" height="1" fill="#888888"/>
<rect x="438" y="487" width="2" height="1" fill="#d00000"/>
<rect x="463" y="464" width="2" height="1" fill="#ffffff"/>
<rect x="400" y="425" width="1" height="1" fill="#707070"/>
<rect x="465" y="482" width="1" height="2" fill="#606060"/>
<rect x="380" y="436" width="1" height="2" fill="#5058b8"/>
<rect x="437" y="496" width="2" height="1" fill="#c8e058"/>
<rect x="395" y="419" width="2" height="1" fill="#707070"/>
<rect x="435" y="456" width="1" height="2" fill="#50e098"/>
<rect x="431" y="499" width="1" height="1" fill="#a0a0a0"/>
<rect x="477" y="493" width="2" height="1" fill="#f8a850"/>
<rect x="403" y="422" width="1" height="2" fill="#5058b8"/>
<rect x="426" y="437" width="1" height="1" fill="#989898"/>
<rect x="412" y="459" width="1" height="1" fill="#989898"/>
<rect x="470" y="497" width="1" height="2" fill="#ffffff"/>
<rect x="398" y="440" width="2" height="1" fill="#606060"/>
<rect x="426" y="441" width="2" height="1" fill="#50e098"/>
<rect x="473" y="441" width="1" height="1" fill="#a0a0a0"/>
<rect x="487" y="492" width="1" height="2" fill="#888888"/>
<rect x="390" y="439" width="2" height="1" fill="#707070"/>
<rect x="447" y="487" width="2" height="1" fill="#40d0b8"/>
<rect x="445" y="511" width="1" height="1" fill="#f8a850"/>
<rect x="448" y="513" width="1" height="1" fill="#30b0c8"/>
<rect x="431" y="433" width="2" height="1" fill="#2888c8"/>
<rect x="442" y="439" width="1" height="1" fill="#b0b0b0"/>
<rect x="417" y="473" width="1" height="1" fill="#888888"/>
<rect x="439" y="490" width="1" height="1" fill="#3868c0"/>
<rect x="456" y="442" width="1" height="2" fill="#d00000"/>
<rect x="493" y="484" width="1" height="1" fill="#989898"/>
<rect x="420" y="447" width="1" height="1" fill="#a0a0a0"/>
<rect x="423" y="421" width="1" height="1" fill="#d00000"/>
<rect x="463" y="457" width="1" height="2" fill="#30b0c8"/>
<rect x="435" y="440" width="1" height="2" fill="#b0b0b0"/>
<rect x="423" y="450" width="1" height="1" fill="#50e098"/>
<rect x="412" y="484" width="1" height="2" fill="#707070"/>
<rect x="429" y="440" width="1" height="1" fill="#888888"/>
<rect x="413" y="418" width="1" height="1" fill="#40d0b8"/>
<rect x="453" y="494" width="2" height="1" fill="#40d0b8"/>
<rect x="378" y="430" width="1" height="2" fill="#a0a0a0"/>
<rect x="408" y="424" width="1" height="1" fill="#707070"/>
<rect x="458" y="509" width="1" height="1" fill="#707070"/>
<rect x="458" y="428" width="2" height="1" fill="#707070"/>
<rect x="460" y="444" width="1" height="1" fill="#989898"/>
<rect x="441" y="489" width="1" height="2" fill="#a0a0a0"/>
<rect x="444" y="496" width="1" height="1" fill="#888888"/>
<rect x="402" y="445" width="1" height="2" fill="#f05030"/>
<rect x="431" y="450" width="1" height="1" fill="#f080b8"/>
<rect x="441" y="511" width="2" height="1" fill="#30b0c8"/>
<rect x="427" y="476" width="1" height="2" fill="#f05030"/>
<rect x="455" y="434" width="1" height="1" fill="#b0b0b0"/>
<rect x="465" y="493" width="1" height="2" fill="#f080b8"/>
<rect x="422" y="492" width="1" height="1" fill="#b0b0b0"/>
<rect x="406" y="471" width="2" height="1" fill="#40d0b8"/>
<rect x="450" y="460" width="2" height="1" fill="#606060"/>
<rect x="472" y="442" width="1" height="1" fill="#a0a0a0"/>
<rect x="450" y="500" width="1" height="2" fill="#50e098"/>
<rect x="406" y="431" width="1" height="2" fill="#c0c0c0"/>
<rect x="379" y="434" width="1" height="2" fill="#ffffff"/>
<rect x="390" y="424" width="1" height="1" fill="#f0d058"/>
<rect x="408" y="421" width="1" height="1" fill="#30b0c8"/>
<rect x="395" y="443" width="2" height="1" fill="#989898"/>
<rect x="461" y="439" width="1" height="2" fill="#f080b8"/>
<rect x="474" y="453" width="1" height="1" fill="#606060"/>
<rect x="479" y="490" width="1" height="2" fill="#a0a0a0"/>
<rect x="406" y="420" width="1" height="1" fill="#68e078"/>
<rect x="466" y="480" width="2" height="1" fill="#8070c0"/>
<rect x="424" y="431" width="2" height="1" fill="#f05030"/>
<rect x="428" y="426" width="1" height="1" fill="#b0b0b0"/>
<rect x="470" y="443" width="2" height="1" fill="#989898"/>
<rect x="462" y="513" width="1" height="2" fill="#d00000"/>
<rect x="408" y="420" width="1" height="1" fill="#2888c8"/>
<rect x="454" y="513" width="1" height="1" fill="#b0b0b0"/>
<rect x="452" y="450" width="1" height="1" fill="#a0a0a0"/>
<rect x="428" y="421" width="1" height="1" fill="#707070"/>
<rect x="445" y="439" width="1" height="1" fill="#989898"/>
<rect x="420" y="478" width="1" height="1" fill="#f0d058"/>
<rect x="417" y="440" width="1" height="1" fill="#2888c8"/>
<rect x="489" y="483" width="2" height="1" fill="#c8e058"/>
<rect x="434" y="451" width="1" height="1" fill="#5058b8"/>
<rect x="420" y="446" width="1" height="1" fill="#ffffff"/>
<rect x="382" y="421" width="1" height="1" fill="#c8e058"/>
<rect x="436" y="494" width="1" height="1" fill="#e06088"/>
<rect x="423" y="488" width="1" height="1" fill="#f080b8"/>
<rect x="387" y="422" width="1" height="1" fill="#5058b8"/>
<rect x="416" y="426" width="1" height="1" fill="#d00000"/>
<rect x="448" y="498" width="1" height="2" fill="#b0b0b0"/>
<rect x="451" y="432" width="1" height="2" fill="#c0c0c0"/>
<rect x="440" y="434" width="1" height="2" fill="#f0d058"/>
<rect x="461" y="417" width="1" height="1" fill="#8070c0"/>
<rect x="394" y="442" width="1" height="2" fill="#30b0c8"/>
<rect x="424" y="419" width="1" height="1" fill="#707070"/>
<rect x="433" y="509" width="1" height="1" fill="#989898"/>
<rect x="459" y="471" width="1" height="2" fill="#a0a0a0"/>
<rect x="402" y="420" width="1" height="2" fill="#707070"/>
<rect x="418" y="444" width="1" height="2" fill="#a0a0a0"/>
<rect x="433" y="436" width="1" height="2" fill="#2888c8"/>
<rect x="386" y="426" width="1" height="1" fill="#606060"/>
<rect x="476" y="457" width="1" height="1" fill="#c0c0c0"/>
<rect x="433" y="496" width="1" height="1" fill="#707070"/>
<rect x="464" y="485" width="2" height="1" fill="#50e098"/>
<rect x="430" y="450" width="1" height="1" fill="#5058b8"/>
<rect x="400" y="450" width="1" height="1" fill="#888888"/>
<rect x="414" y="469" width="2" height="1" fill="#606060"/>
<rect x="480" y="462" width="1" height="1" fill="#40d0b8"/>
<rect x="447" y="494" width="1" height="2" fill="#50e098"/>
<rect x="379" y="425" width="1" height="1" fill="#b0b0b0"/>
<rect x="436" y="444" width="2" height="1" fill="#a0a0a0"/>
<rect x="464" y="441" width="1" height="1" fill="#a0a0a0"/>
<rect x="413" y="427" width="1" height="2" fill="#989898"/>
<rect x="418" y="468" width="1" height="2" fill="#40d0b8"/>
<rect x="483" y="494" width="1" height="1" fill="#f05030"/>
<rect x="453" y="512" width="1" height="2" fill="#a0a0a0"/>
<rect x="409" y="468" width="2" height="1" fill="#40d0b8"/>
<rect x="413" y="484" width="1" height="1" fill="#30b0c8"/>
<rect x="468" y="502" width="1" height="2" fill="#2888c8"/>
<rect x="406" y="467" width="1" height="2" fill="#606060"/>
<rect x="463" y="424" width="1" height="1" fill="#2888c8"/>
<rect x="408" y="459" width="1" height="1" fill="#f080b8"/>
<rect x="469" y="465" width="1" height="1" fill="#606060"/>
<rect x="416" y="463" width="1" height="1" fill="#3868c0"/>
<rect x="424" y="488" width="1" height="1" fill="#b0b0b0"/>
<rect x="404" y="442" width="1" height="1" fill="#a0a0a0"/>
<rect x="402" y="439" width="1" height="1" fill="#606060"/>
<rect x="459" y="506" width="1" height="1" fill="#a0a0a0"/>
<rect x="412" y="465" width="1" height="1" fill="#40d0b8"/>
<rect x="395" y="446" width="1" height="1" fill="#707070"/>
<rect x="449" y="447" width="1" height="1" fill="#888888"/>
<rect x="388" y="445" width="2" height="1" fill="#40d0b8"/>
<rect x="453" y="436" width="1" height="1" fill="#707070"/>
<rect x="434" y="503" width="1" height="1" fill="#c8e058"/>
<rect x="459" y="443" width="1" height="1" fill="#f0d058"/>
<rect x="470" y="469" width="1" height="2" fill="#707070"/>
<rect x="478" y="453" width="1" height="1" fill="#50e098"/>
<rect x="465" y="489" width="1" height="2" fill="#40d0b8"/>
<rect x="409" y="422" width="2" height="1" fill="#707070"/>
<rect x="443" y="490" width="1" height="2" fill="#68e078"/>
<rect x="489" y="469" width="2" height="1" fill="#606060"/>
<rect x="464" y="472" width="1" height="1" fill="#606060"/>
<rect x="462" y="435" width="1" height="1" fill="#888888"/>
<rect x="463" y="447" width="1" height="1" fill="#606060"/>
<rect x="420" y="492" width="1" height="2" fill="#c0c0c0"/>
<rect x="396" y="455" width="1" height="2" fill="#b0b0b0"/>
<rect x="488" y="502" width="1" height="2" fill="#f080b8"/>
<rect x="495" y="488" width="1" height="1" fill="#606060"/>
<rect x="377" y="433" width="1" height="2" fill="#c0c0c0"/>
<rect x="428" y="420" width="1" height="2" fill="#606060"/>
<rect x="394" y="438" width="1" height="1" fill="#707070"/>
<rect x="462" y="460" width="1" height="1" fill="#f05030"/>
<rect x="427" y="443" width="1" height="1" fill="#30b0c8"/>
<rect x="465" y="449" width="1" height="1" fill="#30b0c8"/>
<rect x="412" y="471" width="1" height="2" fill="#8070c0"/>
<rect x="401" y="422" width="1" height="2" fill="#707070"/>
<rect x="484" y="493" width="2" height="1" fill="#68e078"/>
<rect x="492" y="479" width="1" height="1" fill="#f05030"/>
<rect x="448" y="511" width="1" height="2" fill="#888888"/>
<rect x="420" y="441" width="1" height="2" fill="#e06088"/>
<rect x="419" y="438" width="1" height="2" fill="#5058b8"/>
<rect x="414" y="464" width="2" height="1" fill="#50e098"/>
<rect x="386" y="424" width="1" height="1" fill="#b0b0b0"/>
<rect x="399" y="420" width="1" height="2" fill="#a0a0a0"/>
<rect x="455" y="514" width="1" height="1" fill="#f05030"/>
<rect x="465" y="511" width="1" height="2" fill="#3868c0"/>
<rect x="461" y="456" width="2" height="1" fill="#8070c0"/>
<rect x="376" y="435" width="1" height="2" fill="#f0d058"/>
<rect x="432" y="456" width="1" height="2" fill="#40d0b8"/>
<rect x="412" y="444" width="1" height="1" fill="#989898"/>
<rect x="473" y="480" width="1" height="1" fill="#30b0c8"/>
<rect x="482" y="470" width="1" height="1" fill="#ffffff"/>
<rect x="483" y="468" width="1" height="2" fill="#c8e058"/>
<rect x="458" y="502" width="1" height="1" fill="#50e098"/>
<rect x="492" y="491" width="1" height="1" fill="#a0a0a0"/>
<rect x="393" y="428" width="1" height="1" fill="#3868c0"/>
<rect x="426" y="468" width="1" height="2" fill="#989898"/>
<rect x="450" y="499" width="1" height="2" fill="#888888"/>
<rect x="423" y="481" width="1" height="2" fill="#f8a850"/>
<rect x="435" y="496" width="1" height="1" fill="#a0a0a0"/>
<rect x="420" y="452" width="1" height="1" fill="#5058b8"/>
<rect x="461" y="473" width="1" height="1" fill="#989898"/>
<rect x="457" y="439" width="1" height="2" fill="#888888"/>
<rect x="449" y="462" width="1" height="2" fill="#50e098"/>
<rect x="421" y="490" width="2" height="1" fill="#50e098"/>
<rect x="446" y="506" width="1" height="1" fill="#40d0b8"/>
<rect x="444" y="514" width="1" height="1" fill="#888888"/>
<rect x="481" y="465" width="1" height="2" fill="#888888"/>
<rect x="429" y="462" width="1" height="1" fill="#50e098"/>
<rect x="438" y="455" width="1" height="1" fill="#989898"/>
<rect x="435" y="438" width="1" height="2" fill="#8070c0"/>
<rect x="466" y="477" width="2" height="1" fill="#30b0c8"/>
<rect x="465" y="432" width="1" height="1" fill="#707070"/>
<rect x="441" y="515" width="1" height="2" fill="#b0b0b0"/>
<rect x="413" y="472" width="1" height="2" fill="#e06088"/>
<rect x="419" y="491" width="1" height="2" fill="#68e078"/>
<rect x="476" y="476" width="1" height="1" fill="#f0d058"/>
<rect x="412" y="432" width="1" height="1" fill="#f8a850"/>
<rect x="447" y="456" width="1" height="2" fill="#50e098"/>
<rect x="404" y="458" width="1" height="2" fill="#606060"/>
<rect x="464" y="456" width="1" height="1" fill="#707070"/>
<rect x="430" y="492" width="1" height="2" fill="#c0c0c0"/>
<rect x="440" y="430" width="1" height="2" fill="#606060"/>
<rect x="466" y="480" width="1" height="2" fill="#2888c8"/>
<rect x="450" y="448" width="2" height="1" fill="#707070"/>
<rect x="406" y="463" width="1" height="2" fill="#c0c0c0"/>
<rect x="451" y="470" width="1" height="1" fill="#888888"/>
<rect x="475" y="470" width="1" height="1" fill="#b0b0b0"/>
<rect x="477" y="483" width="1" height="1" fill="#c0c0c0"/>
<rect x="455" y="443" width="1" height="1" fill="#e06088"/>
<rect x="379" y="438" width="1" height="2" fill="#606060"/>
<rect x="453" y="492" width="1" height="1" fill="#b0b0b0"/>
<rect x="400" y="449" width="2" height="1" fill="#989898"/>
<rect x="390" y="425" width="1" height="1" fill="#989898"/>
<rect x="447" y="463" width="1" height="2" fill="#40d0b8"/>
<rect x="429" y="443" width="1" height="2" fill="#707070"/>
<rect x="407" y="428" width="2" height="1" fill="#989898"/>
<rect x="464" y="450" width="1" height="1" fill="#c0c0c0"/>
<rect x="426" y="422" width="1" height="2" fill="#2888c8"/>
<rect x="466" y="447" width="1" height="1" fill="#989898"/>
<rect x="467" y="446" width="1" height="1" fill="#606060"/>
<rect x="432" y="426" width="1" height="1" fill="#707070"/>
<rect x="450" y="449" width="2" height="1" fill="#606060"/>
<rect x="466" y="443" width="1" height="2" fill="#f8a850"/>
<rect x="452" y="485" width="1" height="1" fill="#707070"/>
<rect x="414" y="444" width="1" height="2" fill="#606060"/>
<rect x="462" y="505" width="1" height="2" fill="#c0c0c0"/>
<rect x="449" y="505" width="1" height="2" fill="#c8e058"/>
<rect x="424" y="472" width="1" height="1" fill="#8070c0"/>
<rect x="470" y="465" width="1" height="2" fill="#888888"/>
<rect x="438" y="457" width="1" height="2" fill="#888888"/>
<rect x="460" y="495" width="1" height="1" fill="#c0c0c0"/>
<rect x="484" y="506" width="1" height="1" fill="#68e078"/>
<rect x="458" y="496" width="1" height="1" fill="#707070"/>
<rect x="412" y="440" width="1" height="1" fill="#f0d058"/>
<rect x="464" y="444" width="1" height="1" fill="#30b0c8"/>
<rect x="460" y="439" width="2" height="1" fill="#d00000"/>
<rect x="437" y="441" width="1" height="1" fill="#5058b8"/>
<rect x="444" y="504" width="2" height="1" fill="#606060"/>
<rect x="424" y="455" width="2" height="1" fill="#e06088"/>
<rect x="450" y="496" width="1" height="2" fill="#606060"/>
<rect x="456" y="493" width="1" height="1" fill="#f05030"/>
<rect x="484" y="496" width="1" height="2" fill="#a0a0a0"/>
<rect x="439" y="431" width="1" height="2" fill="#f8a850"/>
<rect x="485" y="488" width="1" height="1" fill="#707070"/>
<rect x="397" y="424" width="1" height="2" fill="#c0c0c0"/>
<rect x="459" y="425" width="2" height="1" fill="#50e098"/>
<rect x="432" y="435" width="2" height="1" fill="#606060"/>
<rect x="420" y="473" width="2" height="1" fill="#f8a850"/>
<rect x="469" y="496" width="1" height="2" fill="#f0d058"/>
<rect x="420" y="420" width="1" height="2" fill="#a0a0a0"/>
<rect x="417" y="438" width="1" height="2" fill="#d00000"/>
<rect x="458" y="488" width="1" height="2" fill="#606060"/>
<rect x="415" y="466" width="1" height="2" fill="#b0b0b0"/>
<rect x="429" y="498" width="1" height="2" fill="#d00000"/>
<rect x="464" y="481" width="2" height="1" fill="#40d0b8"/>
<rect x="464" y="487" width="1" height="1" fill="#989898"/>
<rect x="426" y="485" width="1" height="1" fill="#c0c0c0"/>
<rect x="433" y="424" width="1" height="1" fill="#e06088"/>
<rect x="466" y="446" width="2" height="1" fill="#d00000"/>
<rect x="463" y="485" width="1" height="1" fill="#8070c0"/>
<rect x="394" y="428" width="1" height="2" fill="#c8e058"/>
<rect x="489" y="479" width="1" height="1" fill="#c8e058"/>
<rect x="460" y="438" width="1" height="1" fill="#c0c0c0"/>
<rect x="429" y="501" width="1" height="1" fill="#c0c0c0"/>
<rect x="418" y="452" width="1" height="1" fill="#606060"/>
<rect x="472" y="505" width="1" height="1" fill="#5058b8"/>
<rect x="477" y="453" width="2" height="1" fill="#d00000"/>
<rect x="408" y="444" width="1" height="1" fill="#68e078"/>
<rect x="393" y="434" width="1" height="2" fill="#888888"/>
<rect x="389" y="445" width="1" height="1" fill="#b0b0b0"/>
<rect x="492" y="490" width="1" height="1" fill="#606060"/>
<rect x="418" y="428" width="1" height="2" fill="#f0d058"/>
<rect x="437" y="486" width="1" height="2" fill="#f8a850"/>
<rect x="479" y="501" width="1" height="1" fill="#989898"/>
<rect x="413" y="446" width="1" height="1" fill="#b0b0b0"/>
<rect x="418" y="455" width="1" height="1" fill="#a0a0a0"/>
<rect x="401" y="459" width="1" height="1" fill="#b0b0b0"/>
<rect x="491" y="478" width="2" height="1" fill="#50e098"/>
<rect x="472" y="508" width="1" height="1" fill="#a0a0a0"/>
<rect x="426" y="452" width="1" height="1" fill="#a0a0a0"/>
<rect x="399" y="439" width="1" height="1" fill="#c0c0c0"/>
<rect x="382" y="425" width="1" height="2" fill="#888888"/>
<rect x="418" y="462" width="2" height="1" fill="#50e098"/>
<rect x="444" y="444" width="1" height="2" fill="#c8e058"/>
<rect x="451" y="454" width="1" height="2" fill="#f8a850"/>
<rect x="393" y="448" width="1" height="1" fill="#707070"/>
<rect x="475" y="472" width="2" height="1" fill="#888888"/>
<rect x="417" y="463" width="1" height="2" fill="#2888c8"/>
<rect x="418" y="427" width="1" height="1" fill="#50e098"/>
<rect x="460" y="511" width="1" height="1" fill="#606060"/>
<rect x="456" y="463" width="1" height="1" fill="#ffffff"/>
<rect x="486" y="495" width="1" height="2" fill="#68e078"/>
<rect x="394" y="422" width="1" height="2" fill="#606060"/>
<rect x="417" y="478" width="1" height="1" fill="#606060"/>
<rect x="478" y="479" width="1" height="2" fill="#c0c0c0"/>
<rect x="478" y="501" width="1" height="1" fill="#989898"/>
<rect x="398" y="434" width="1" height="2" fill="#c0c0c0"/>
<rect x="459" y="449" width="1" height="1" fill="#f8a850"/>
<rect x="435" y="492" width="1" height="1" fill="#a0a0a0"/>
<rect x="474" y="478" width="1" height="2" fill="#707070"/>
<rect x="487" y="497" width="2" height="1" fill="#8070c0"/>
<rect x="464" y="440" width="1" height="2" fill="#8070c0"/>
<rect x="377" y="431" width="1" height="1" fill="#68e078"/>
<rect x="417" y="452" width="1" height="2" fill="#50e098"/>
<rect x="459" y="423" width="1" height="1" fill="#b0b0b0"/>
<rect x="438" y="430" width="1" height="1" fill="#e06088"/>
<rect x="438" y="440" width="1" height="2" fill="#c0c0c0"/>
<rect x="398" y="430" width="2" height="1" fill="#30b0c8"/>
<rect x="406" y="439" width="1" height="1" fill="#a0a0a0"/>
<rect x="420" y="457" width="1" height="1" fill="#2888c8"/>
<rect x="406" y="421" width="1" height="1" fill="#f8a850"/>
<rect x="405" y="427" width="1" height="1" fill="#b0b0b0"/>
<rect x="428" y="462" width="2" height="1" fill="#5058b8"/>
<rect x="410" y="440" width="1" height="1" fill="#f8a850"/>
<rect x="432" y="430" width="1" height="2" fill="#2888c8"/>
<rect x="477" y="494" width="1" height="1" fill="#40d0b8"/>
<rect x="463" y="450" width="1" height="1" fill="#c0c0c0"/>
<rect x="465" y="503" width="1" height="2" fill="#a0a0a0"/>
<rect x="404" y="420" width="1" height="2" fill="#2888c8"/>
<rect x="461" y="429" width="1" height="1" fill="#707070"/>
<rect x="470" y="478" width="1" height="1" fill="#c0c0c0"/>
<rect x="469" y="504" width="1" height="2" fill="#a0a0a0"/>
<rect x="417" y="485" width="1" height="2" fill="#989898"/>
<rect x="406" y="458" width="1" height="1" fill="#50e098"/>
<rect x="480" y="462" width="1" height="2" fill="#707070"/>
<rect x="438" y="473" width="1" height="1" fill="#707070"/>
<rect x="377" y="434" width="1" height="1" fill="#989898"/>
<rect x="443" y="481" width="1" height="1" fill="#a0a0a0"/>
<rect x="452" y="446" width="1" height="1" fill="#30b0c8"/>
<rect x="469" y="428" width="1" height="2" fill="#d00000"/>
<rect x="384" y="434" width="1" height="2" fill="#c0c0c0"/>
<rect x="443" y="460" width="1" height="1" fill="#50e098"/>
<rect x="405" y="426" width="1" height="2" fill="#2888c8"/>
<rect x="402" y="431" width="1" height="2" fill="#707070"/>
<rect x="405" y="440" width="1" height="2" fill="#c0c0c0"/>
<rect x="429" y="425" width="1" height="2" fill="#40d0b8"/>
<rect x="408" y="463" width="2" height="1" fill="#989898"/>
<rect x="409" y="441" width="1" height="1" fill="#b0b0b0"/>
<rect x="435" y="505" width="1" height="2" fill="#ffffff"/>
<rect x="474" y="439" width="1" height="2" fill="#c0c0c0"/>
<rect x="433" y="489" width="1" height="1" fill="#888888"/>
<rect x="437" y="444" width="1" height="2" fill="#40d0b8"/>
<rect x="380" y="423" width="2" height="1" fill="#c0c0c0"/>
<rect x="483" y="506" width="2" height="1" fill="#888888"/>
<rect x="467" y="510" width="1" height="1" fill="#606060"/>
<rect x="461" y="469" width="1" height="1" fill="#50e098"/>
<rect x="419" y="469" width="1" height="2" fill="#989898"/>
<rect x="423" y="450" width="1" height="1" fill="#989898"/>
<rect x="457" y="477" width="1" height="1" fill="#40d0b8"/>
<rect x="433" y="485" width="2" height="1" fill="#5058b8"/>
<rect x="451" y="499" width="1" height="1" fill="#a0a0a0"/>
<rect x="471" y="503" width="1" height="2" fill="#c0c0c0"/>
<rect x="412" y="475" width="1" height="1" fill="#b0b0b0"/>
<rect x="438" y="449" width="1" height="2" fill="#707070"/>
<rect x="446" y="455" width="2" height="1" fill="#888888"/>
<rect x="402" y="443" width="1" height="1" fill="#c0c0c0"/>
<rect x="471" y="441" width="1" height="2" fill="#50e098"/>
<rect x="487" y="485" width="1" height="1" fill="#f8a850"/>
<rect x="417" y="446" width="2" height="1" fill="#a0a0a0"/>
<rect x="425" y="422" width="1" height="1" fill="#8070c0"/>
<rect x="413" y="473" width="1" height="1" fill="#f0d058"/>
<rect x="422" y="464" width="1" height="2" fill="#30b0c8"/>
<rect x="443" y="509" width="1" height="1" fill="#989898"/>
<rect x="455" y="446" width="2" height="1" fill="#f080b8"/>
<rect x="399" y="453" width="1" height="1" fill="#b0b0b0"/>
<rect x="398" y="457" width="2" height="1" fill="#b0b0b0"/>
<rect x="429" y="475" width="1" height="1" fill="#30b0c8"/>
<rect x="457" y="505" width="2" height="1" fill="#f080b8"/>
<rect x="405" y="459" width="1" height="2" fill="#40d0b8"/>
<rect x="475" y="505" width="1" height="2" fill="#ffffff"/>
<rect x="464" y="427" width="1" height="2" fill="#a0a0a0"/>
<rect x="441" y="458" width="2" height="1" fill="#40d0b8"/>
<rect x="462" y="437" width="1" height="1" fill="#c0c0c0"/>
<rect x="393" y="440" width="1" height="1" fill="#ffffff"/>
<rect x="418" y="463" width="2" height="1" fill="#a0a0a0"/>
<rect x="390" y="442" width="1" height="1" fill="#f0d058"/>
<rect x="404" y="463" width="1" height="2" fill="#40d0b8"/>
<rect x="456" y="438" width="1" height="1" fill="#40d0b8"/>
<rect x="401" y="462" width="1" height="2" fill="#606060"/>
<rect x="416" y="454" width="1" height="1" fill="#50e098"/>
<rect x="437" y="428" width="2" height="1" fill="#5058b8"/>
<rect x="454" y="499" width="1" height="1" fill="#50e098"/>
<rect x="412" y="430" width="2" height="1" fill="#f080b8"/>
<rect x="404" y="466" width="1" height="2" fill="#a0a0a0"/>
<rect x="405" y="467" width="1" height="1" fill="#30b0c8"/>
<rect x="452" y="510" width="1" height="2" fill="#f8a850"/>
<rect x="406" y="440" width="1" height="2" fill="#606060"/>
<rect x="430" y="437" width="1" height="1" fill="#989898"/>
<rect x="380" y="440" width="1" height="2" fill="#888888"/>
<rect x="400" y="430" width="1" height="1" fill="#30b0c8"/>
<rect x="465" y="503" width="2" height="1" fill="#a0a0a0"/>
<rect x="473" y="497" width="2" height="1" fill="#c0c0c0"/>
<rect x="436" y="461" width="1" height="2" fill="#8070c0"/>
<rect x="459" y="485" width="1" height="2" fill="#989898"/>
<rect x="418" y="441" width="1" height="2" fill="#f8a850"/>
<rect x="458" y="501" width="1" height="1" fill="#f8a850"/>
<rect x="410" y="473" width="1" height="2" fill="#989898"/>
<rect x="477" y="471" width="1" height="1" fill="#989898"/>
<rect x="488" y="498" width="1" height="1" fill="#40d0b8"/>
<rect x="477" y="498" width="1" height="1" fill="#50e098"/>
<rect x="478" y="454" width="1" height="2" fill="#989898"/>
<rect x="426" y="437" width="2" height="1" fill="#a0a0a0"/>
<rect x="467" y="476" width="1" height="1" fill="#c8e058"/>
<rect x="440" y="482" width="1" height="1" fill="#50e098"/>
<rect x="401" y="424" width="1" height="2" fill="#f0d058"/>
<rect x="484" y="487" width="1" height="1" fill="#a0a0a0"/>
<rect x="434" y="493" width="1" height="2" fill="#f0d058"/>
<rect x="436" y="477" width="1" height="2" fill="#30b0c8"/>
<rect x="378" y="432" width="2" height="1" fill="#c0c0c0"/>
<rect x="465" y="494" width="1" height="1" fill="#2888c8"/>
<rect x="434" y="509" width="1" height="1" fill="#b0b0b0"/>
<rect x="474" y="441" width="1" height="2" fill="#989898"/>
<rect x="444" y="456" width="1" height="1" fill="#888888"/>
<rect x="468" y="510" width="1" height="2" fill="#606060"/>
<rect x="406" y="452" width="1" height="1" fill="#d00000"/>
<rect x="453" y="469" width="2" height="1" fill="#f080b8"/>
<rect x="441" y="446" width="1" height="1" fill="#989898"/>
<rect x="437" y="502" width="1" height="1" fill="#b0b0b0"/>
<rect x="453" y="496" width="1" height="2" fill="#50e098"/>
<rect x="431" y="448" width="2" height="1" fill="#a0a0a0"/>
<rect x="398" y="449" width="1" height="1" fill="#888888"/>
<rect x="430" y="440" width="1" height="1" fill="#68e078"/>
<rect x="423" y="494" width="1" height="1" fill="#606060"/>
<rect x="420" y="421" width="1" height="1" fill="#40d0b8"/>
<rect x="468" y="498" width="1" height="1" fill="#68e078"/>
<rect x="441" y="439" width="1" height="1" fill="#c0c0c0"/>
<rect x="472" y="459" width="1" height="2" fill="#68e078"/>
<rect x="396" y="455" width="1" height="2" fill="#68e078"/>
<rect x="441" y="489" width="1" height="1" fill="#f0d058"/>
<rect x="426" y="498" width="1" height="1" fill="#c0c0c0"/>
<rect x="486" y="486" width="1" height="2" fill="#606060"/>
<rect x="446" y="481" width="1" height="1" fill="#a0a0a0"/>
<rect x="480" y="473" width="1" height="1" fill="#707070"/>
<rect x="483" y="486" width="2" height="1" fill="#989898"/>
<rect x="415" y="475" width="1" height="1" fill="#a0a0a0"/>
<rect x="481" y="495" width="1" height="1" fill="#50e098"/>
<rect x="467" y="495" width="1" height="2" fill="#b0b0b0"/>
<rect x="461" y="418" width="2" height="1" fill="#50e098"/>
<rect x="468" y="432" width="1" height="1" fill="#ffffff"/>
<rect x="438" y="448" width="1" height="2" fill="#50e098"/>
<rect x="426" y="488" width="2" height="1" fill="#3868c0"/>
<rect x="466" y="435" width="1" height="1" fill="#707070"/>
<rect x="409" y="450" width="1" height="2" fill="#b0b0b0"/>
<rect x="472" y="475" width="1" height="2" fill="#c0c0c0"/>
<rect x="402" y="436" width="1" height="1" fill="#888888"/>
<rect x="473" y="496" width="1" height="2" fill="#30b0c8"/>
<rect x="458" y="473" width="1" height="1" fill="#50e098"/>
<rect x="420" y="478" width="1" height="1" fill="#30b0c8"/>
<rect x="405" y="456" width="1" height="2" fill="#8070c0"/>
<rect x="484" y="506" width="1" height="1" fill="#40d0b8"/>
<rect x="418" y="428" width="1" height="2" fill="#e06088"/>
<rect x="447" y="475" width="1" height="1" fill="#8070c0"/>
<rect x="432" y="434" width="1" height="2" fill="#a0a0a0"/>
<rect x="400" y="458" width="1" height="2" fill="#888888"/>
<rect x="464" y="422" width="2" height="1" fill="#ffffff"/>
<rect x="420" y="450" width="1" height="2" fill="#a0a0a0"/>
<rect x="435" y="458" width="1" height="2" fill="#a0a0a0"/>
<rect x="482" y="478" width="1" height="2" fill="#606060"/>
<rect x="409" y="459" width="1" height="1" fill="#e06088"/>
<rect x="383" y="420" width="2" height="1" fill="#707070"/>
<rect x="404" y="458" width="1" height="1" fill="#2888c8"/>
<rect x="478" y="451" width="1" height="1" fill="#707070"/>
<rect x="433" y="447" width="2" height="1" fill="#ffffff"/>
<rect x="436" y="450" width="2" height="1" fill="#d00000"/>
<rect x="482" y="507" width="1" height="2" fill="#606060"/>
<rect x="452" y="507" width="1" height="1" fill="#a0a0a0"/>
<rect x="421" y="480" width="1" height="1" fill="#ffffff"/>
<rect x="454" y="513" width="2" height="1" fill="#707070"/>
<rect x="447" y="514" width="1" height="1" fill="#68e078"/>
<rect x="393" y="449" width="1" height="2" fill="#50e098"/>
<rect x="436" y="508" width="1" height="2" fill="#606060"/>
<rect x="418" y="434" width="1" height="2" fill="#d00000"/>
<rect x="453" y="442" width="1" height="1" fill="#a0a0a0"/>
<rect x="455" y="499" width="1" height="1" fill="#888888"/>
<rect x="387" y="434" width="1" height="1" fill="#989898"/>
<rect x="467" y="469" width="1" height="1" fill="#888888"/>
<rect x="430" y="500" width="1" height="1" fill="#888888"/>
<rect x="388" y="440" width="2" height="1" fill="#50e098"/>
<rect x="436" y="455" width="1" height="1" fill="#606060"/>
<rect x="397" y="427" width="1" height="1" fill="#2888c8"/>
<rect x="406" y="426" width="1" height="1" fill="#989898"/>
<rect x="432" y="457" width="1" height="1" fill="#ffffff"/>
<rect x="407" y="473" width="2" height="1" fill="#f0d058"/>
<rect x="468" y="458" width="1" height="2" fill="#68e078"/>
<rect x="462" y="432" width="2" height="1" fill="#e06088"/>
<rect x="413" y="428" width="2" height="1" fill="#707070"/>
<rect x="450" y="450" width="1" height="1" fill="#b0b0b0"/>
<rect x="412" y="437" width="1" height="1" fill="#8070c0"/>
<rect x="470" y="441" width="1" height="2" fill="#a0a0a0"/>
<rect x="469" y="447" width="1" height="1" fill="#606060"/>
<rect x="429" y="429" width="1" height="2" fill="#888888"/>
<rect x="421" y="492" width="2" height="1" fill="#c0c0c0"/>
<rect x="464" y="504" width="1" height="1" fill="#a0a0a0"/>
<rect x="432" y="427" width="1" height="2" fill="#888888"/>
<rect x="412" y="447" width="1" height="1" fill="#b0b0b0"/>
<rect x="464" y="457" width="1" height="1" fill="#b0b0b0"/>
<rect x="381" y="427" width="1" height="1" fill="#888888"/>
<rect x="462" y="450" width="1" height="2" fill="#888888"/>
<rect x="462" y="461" width="1" height="2" fill="#888888"/>
<rect x="421" y="444" width="2" height="1" fill="#f05030"/>
<rect x="443" y="495" width="2" height="1" fill="#50e098"/>
<rect x="421" y="493" width="2" height="1" fill="#707070"/>
<rect x="397" y="446" width="1" height="1" fill="#40d0b8"/>
<rect x="477" y="500" width="1" height="1" fill="#888888"/>
<rect x="479" y="495" width="1" height="1" fill="#989898"/>
<rect x="485" y="503" width="1" height="1" fill="#50e098"/>
<rect x="468" y="430" width="1" height="1" fill="#b0b0b0"/>
<rect x="379" y="433" width="1" height="2" fill="#30b0c8"/>
<rect x="466" y="424" width="1" height="2" fill="#a0a0a0"/>
<rect x="427" y="467" width="1" height="1" fill="#50e098"/>
<rect x="469" y="493" width="1" height="2" fill="#ffffff"/>
<rect x="460" y="495" width="1" height="2" fill="#8070c0"/>
<rect x="448" y="440" width="2" height="1" fill="#a0a0a0"/>
<rect x="423" y="457" width="1" height="1" fill="#30b0c8"/>
<rect x="457" y="426" width="1" height="1" fill="#888888"/>
<rect x="492" y="491" width="2" height="1" fill="#f080b8"/>
<rect x="447" y="439" width="1" height="1" fill="#a0a0a0"/>
<rect x="406" y="460" width="1" height="1" fill="#989898"/>
<rect x="488" y="476" width="1" height="1" fill="#707070"/>
<rect x="409" y="450" width="1" height="2" fill="#30b0c8"/>
<rect x="461" y="463" width="1" height="1" fill="#989898"/>
<rect x="472" y="471" width="1" height="1" fill="#989898"/>
<rect x="471" y="487" width="1" height="1" fill="#8070c0"/>
<rect x="473" y="435" width="1" height="1" fill="#f0d058"/>
<rect x="470" y="426" width="2" height="1" fill="#c0c0c0"/>
<rect x="452" y="499" width="1" height="1" fill="#d00000"/>
<rect x="432" y="423" width="1" height="2" fill="#c0c0c0"/>
<rect x="461" y="429" width="1" height="1" fill="#3868c0"/>
<rect x="455" y="507" width="1" height="1" fill="#707070"/>
<rect x="398" y="446" width="2" height="1" fill="#888888"/>
<rect x="407" y="431" width="1" height="1" fill="#707070"/>
<rect x="427" y="497" width="1" height="2" fill="#2888c8"/>
<rect x="444" y="450" width="1" height="1" fill="#989898"/>
<rect x="425" y="487" width="1" height="1" fill="#68e078"/>
<rect x="443" y="506" width="2" height="1" fill="#3868c0"/>
<rect x="421" y="491" width="1" height="1" fill="#50e098"/>
<rect x="419" y="491" width="1" height="2" fill="#3868c0"/>
<rect x="491" y="486" width="1" height="1" fill="#40d0b8"/>
<rect x="453" y="438" width="1" height="1" fill="#2888c8"/>
<rect x="471" y="472" width="1" height="2" fill="#707070"/>
<rect x="473" y="509" width="1" height="2" fill="#606060"/>
<rect x="445" y="514" width="1" height="2" fill="#50e098"/>
<rect x="443" y="433" width="1" height="1" fill="#c0c0c0"/>
<rect x="456" y="498" width="1" height="1" fill="#a0a0a0"/>
<rect x="427" y="442" width="1" height="1" fill="#5058b8"/>
<rect x="405" y="454" width="1" height="1" fill="#68e078"/>
<rect x="418" y="443" width="1" height="1" fill="#ffffff"/>
<rect x="447" y="499" width="1" height="1" fill="#c8e058"/>
<rect x="468" y="460" width="1" height="2" fill="#40d0b8"/>
<rect x="433" y="507" width="1" height="2" fill="#c0c0c0"/>
<rect x="438" y="448" width="1" height="1" fill="#f05030"/>
<rect x="403" y="425" width="1" height="1" fill="#a0a0a0"/>
<rect x="474" y="463" width="1" height="2" fill="#707070"/>
<rect x="412" y="449" width="2" height="1" fill="#989898"/>
<rect x="440" y="441" width="1" height="1" fill="#50e098"/>
<rect x="458" y="427" width="1" height="1" fill="#a0a0a0"/>
<rect x="416" y="440" width="1" height="2" fill="#8070c0"/>
<rect x="418" y="445" width="1" height="1" fill="#707070"/>
<rect x="416" y="443" width="2" height="1" fill="#b0b0b0"/>
<rect x="399" y="451" width="1" height="1" fill="#40d0b8"/>
<rect x="424" y="424" width="1" height="1" fill="#b0b0b0"/>
<rect x="433" y="434" width="1" height="2" fill="#b0b0b0"/>
<rect x="401" y="454" width="2" height="1" fill="#989898"/>
<rect x="419" y="459" width="1" height="2" fill="#50e098"/>
<rect x="387" y="434" width="1" height="1" fill="#c0c0c0"/>
<rect x="473" y="491" width="1" height="1" fill="#989898"/>
<rect x="457" y="459" width="1" height="2" fill="#c0c0c0"/>
<rect x="443" y="456" width="1" height="1" fill="#30b0c8"/>
<rect x="426" y="450" width="1" height="2" fill="#b0b0b0"/>
<rect x="467" y="460" width="1" height="2" fill="#606060"/>
<rect x="433" y="430" width="2" height="1" fill="#888888"/>
<rect x="427" y="425" width="1" height="1" fill="#5058b8"/>
<rect x="444" y="445" width="1" height="1" fill="#3868c0"/>
<rect x="469" y="447" width="1" height="1" fill="#d00000"/>
<rect x="468" y="457" width="2" height="1" fill="#c0c0c0"/>
<rect x="409" y="439" width="1" height="2" fill="#3868c0"/>
<rect x="390" y="442" width="1" height="1" fill="#e06088"/>
<rect x="409" y="457" width="1" height="2" fill="#ffffff"/>
<rect x="461" y="501" width="1" height="1" fill="#707070"/>
<rect x="456" y="446" width="2" height="1" fill="#3868c0"/>
<rect x="312" y="377" width="1" height="1" fill="#c0c0c0"/>
<rect x="309" y="376" width="1" height="1" fill="#b0b0b0"/>
<rect x="311" y="380" width="1" height="1" fill="#b0b0b0"/>
<rect x="312" y="375" width="1" height="1" fill="#30b0c8"/>
<rect x="313" y="376" width="1" height="1" fill="#2888c8"/>
<rect x="311" y="379" width="1" height="1" fill="#b0b0b0"/>
<rect x="313" y="383" width="1" height="2" fill="#b0b0b0"/>
<rect x="313" y="381" width="1" height="2" fill="#c8e058"/>
<rect x="313" y="381" width="1" height="1" fill="#5058b8"/>
<rect x="314" y="383" width="1" height="2" fill="#888888"/>
<rect x="315" y="382" width="1" height="1" fill="#a0a0a0"/>
<rect x="310" y="380" width="1" height="2" fill="#606060"/>
<rect x="311" y="380" width="1" height="2" fill="#f080b8"/>
<rect x="310" y="380" width="1" height="1" fill="#f080b8"/>
<rect x="319" y="388" width="1" height="1" fill="#40d0b8"/>
<rect x="316" y="385" width="1" height="2" fill="#a0a0a0"/>
<rect x="319" y="385" width="1" height="1" fill="#c0c0c0"/>
<rect x="321" y="387" width="1" height="1" fill="#a0a0a0"/>
<rect x="320" y="386" width="1" height="2" fill="#989898"/>
<rect x="318" y="385" width="1" height="1" fill="#8070c0"/>
<rect x="318" y="387" width="1" height="1" fill="#b0b0b0"/>
<rect x="318" y="385" width="1" height="1" fill="#68e078"/>
<rect x="322" y="386" width="1" height="1" fill="#40d0b8"/>
<rect x="320" y="391" width="1" height="1" fill="#888888"/>
<rect x="319" y="387" width="1" height="1" fill="#707070"/>
<rect x="322" y="389" width="1" height="1" fill="#707070"/>
<rect x="319" y="388" width="1" height="1" fill="#f8a850"/>
<rect x="320" y="389" width="1" height="2" fill="#888888"/>
<rect x="322" y="385" width="1" height="1" fill="#a0a0a0"/>
<rect x="323" y="385" width="1" height="1" fill="#989898"/>
<rect x="328" y="386" width="1" height="1" fill="#606060"/>
<rect x="326" y="386" width="1" height="2" fill="#e06088"/>
<rect x="336" y="392" width="1" height="1" fill="#606060"/>
<rect x="339" y="390" width="1" height="2" fill="#606060"/>
<rect x="307" y="381" width="1" height="1" fill="#e06088"/>
<rect x="307" y="381" width="1" height="1" fill="#707070"/>
<rect x="298" y="403" width="1" height="2" fill="#30b0c8"/>
<rect x="300" y="402" width="1" height="1" fill="#888888"/>
<rect x="298" y="403" width="1" height="1" fill="#b0b0b0"/>
<rect x="299" y="400" width="1" height="1" fill="#5058b8"/>
<rect x="300" y="406" width="1" height="1" fill="#a0a0a0"/>
<rect x="301" y="406" width="1" height="1" fill="#2888c8"/>
<rect x="300" y="407" width="1" height="2" fill="#707070"/>
<rect x="300" y="405" width="1" height="1" fill="#5058b8"/>
<rect x="301" y="407" width="1" height="2" fill="#30b0c8"/>
<rect x="300" y="405" width="1" height="1" fill="#8070c0"/>
<rect x="303" y="411" width="1" height="2" fill="#888888"/>
<rect x="301" y="409" width="1" height="2" fill="#f080b8"/>
<rect x="303" y="410" width="1" height="1" fill="#606060"/>
<rect x="303" y="409" width="1" height="1" fill="#707070"/>
<rect x="308" y="405" width="1" height="1" fill="#989898"/>
<rect x="307" y="403" width="1" height="1" fill="#68e078"/>
<rect x="306" y="404" width="1" height="1" fill="#3868c0"/>
<rect x="307" y="402" width="1" height="1" fill="#a0a0a0"/>
<rect x="283" y="423" width="1" height="1" fill="#606060"/>
<rect x="284" y="423" width="1" height="1" fill="#e06088"/>
<rect x="288" y="421" width="1" height="1" fill="#2888c8"/>
<rect x="289" y="423" width="1" height="1" fill="#8070c0"/>
<rect x="286" y="425" width="1" height="2" fill="#b0b0b0"/>
<rect x="285" y="426" width="1" height="2" fill="#40d0b8"/>
<rect x="290" y="425" width="1" height="1" fill="#3868c0"/>
<rect x="289" y="424" width="1" height="1" fill="#a0a0a0"/>
<rect x="285" y="427" width="1" height="1" fill="#ffffff"/>
<rect x="285" y="428" width="1" height="2" fill="#2888c8"/>
<rect x="287" y="433" width="1" height="2" fill="#606060"/>
<rect x="285" y="435" width="1" height="1" fill="#b0b0b0"/>
<rect x="290" y="434" width="1" height="1" fill="#3868c0"/>
<rect x="291" y="432" width="1" height="1" fill="#f080b8"/>
<rect x="294" y="436" width="1" height="1" fill="#707070"/>
<rect x="293" y="438" width="1" height="2" fill="#8070c0"/>
<rect x="299" y="428" width="1" height="1" fill="#b0b0b0"/>
<rect x="298" y="430" width="1" height="2" fill="#30b0c8"/>
<rect x="301" y="425" width="1" height="1" fill="#3868c0"/>
<rect x="302" y="426" width="1" height="1" fill="#888888"/>
<rect x="312" y="426" width="1" height="1" fill="#888888"/>
<rect x="313" y="428" width="1" height="1" fill="#e06088"/>
<rect x="317" y="430" width="1" height="1" fill="#c0c0c0"/>
<rect x="317" y="428" width="1" height="2" fill="#b0b0b0"/>
<rect x="305" y="437" width="1" height="2" fill="#30b0c8"/>
<rect x="306" y="435" width="1" height="1" fill="#c0c0c0"/>
<rect x="303" y="440" width="1" height="1" fill="#a0a0a0"/>
<rect x="302" y="441" width="1" height="1" fill="#989898"/>
<rect x="284" y="447" width="1" height="1" fill="#888888"/>
<rect x="282" y="449" width="1" height="1" fill="#f080b8"/>
<rect x="288" y="470" width="1" height="2" fill="#c0c0c0"/>
<rect x="287" y="471" width="1" height="2" fill="#c0c0c0"/>
<rect x="494" y="367" width="1" height="1" fill="#40d0b8"/>
<rect x="494" y="363" width="1" height="1" fill="#68e078"/>
<rect x="493" y="367" width="1" height="1" fill="#30b0c8"/>
<rect x="491" y="368" width="1" height="1" fill="#a0a0a0"/>
<rect x="585" y="375" width="1" height="2" fill="#a0a0a0"/>
<rect x="588" y="376" width="1" height="2" fill="#606060"/>
<rect x="585" y="377" width="1" height="2" fill="#e06088"/>
<rect x="585" y="375" width="1" height="2" fill="#d00000"/>
<rect x="566" y="402" width="1" height="1" fill="#f0d058"/>
<rect x="567" y="400" width="1" height="2" fill="#989898"/>
<rect x="567" y="398" width="1" height="2" fill="#a0a0a0"/>
<rect x="566" y="402" width="1" height="2" fill="#606060"/>
<rect x="568" y="401" width="1" height="2" fill="#606060"/>
<rect x="565" y="402" width="1" height="1" fill="#606060"/>
<rect x="556" y="410" width="1" height="1" fill="#30b0c8"/>
<rect x="555" y="410" width="1" height="1" fill="#b0b0b0"/>
<rect x="557" y="410" width="1" height="1" fill="#c0c0c0"/>
<rect x="556" y="410" width="1" height="2" fill="#c0c0c0"/>
<rect x="553" y="412" width="1" height="1" fill="#707070"/>
<rect x="557" y="410" width="1" height="1" fill="#3868c0"/>
<rect x="554" y="412" width="1" height="1" fill="#3868c0"/>
<rect x="555" y="412" width="1" height="1" fill="#5058b8"/>
<rect x="561" y="409" width="1" height="1" fill="#989898"/>
<rect x="561" y="410" width="1" height="1" fill="#c0c0c0"/>
<rect x="562" y="410" width="1" height="2" fill="#989898"/>
<rect x="562" y="410" width="1" height="1" fill="#989898"/>
<rect x="561" y="410" width="1" height="2" fill="#c0c0c0"/>
<rect x="561" y="408" width="1" height="2" fill="#c0c0c0"/>
<rect x="559" y="411" width="1" height="1" fill="#d00000"/>
<rect x="562" y="408" width="1" height="1" fill="#f05030"/>
<rect x="563" y="418" width="1" height="2" fill="#f0d058"/>
<rect x="564" y="418" width="1" height="1" fill="#30b0c8"/>
<rect x="563" y="416" width="1" height="2" fill="#c0c0c0"/>
<rect x="564" y="417" width="1" height="1" fill="#30b0c8"/>
<rect x="563" y="420" width="1" height="1" fill="#606060"/>
<rect x="563" y="417" width="1" height="1" fill="#989898"/>
<rect x="563" y="418" width="1" height="1" fill="#606060"/>
<rect x="562" y="417" width="1" height="1" fill="#50e098"/>
<rect x="553" y="424" width="1" height="1" fill="#c0c0c0"/>
<rect x="552" y="424" width="1" height="1" fill="#888888"/>
<rect x="553" y="423" width="1" height="1" fill="#a0a0a0"/>
<rect x="553" y="424" width="1" height="1" fill="#30b0c8"/>
<rect x="553" y="423" width="1" height="1" fill="#888888"/>
<rect x="553" y="425" width="1" height="1" fill="#5058b8"/>
<rect x="555" y="425" width="1" height="1" fill="#c0c0c0"/>
<rect x="552" y="423" width="1" height="2" fill="#b0b0b0"/>
<rect x="553" y="425" width="1" height="1" fill="#30b0c8"/>
<rect x="553" y="421" width="1" height="2" fill="#2888c8"/>
<rect x="555" y="427" width="1" height="1" fill="#30b0c8"/>
<rect x="557" y="429" width="1" height="1" fill="#c8e058"/>
<rect x="555" y="426" width="1" height="1" fill="#d00000"/>
<rect x="557" y="429" width="1" height="1" fill="#30b0c8"/>
<rect x="557" y="428" width="1" height="1" fill="#3868c0"/>
<rect x="556" y="426" width="1" height="1" fill="#40d0b8"/>
<rect x="556" y="428" width="1" height="1" fill="#f080b8"/>
<rect x="555" y="429" width="1" height="2" fill="#707070"/>
<rect x="556" y="428" width="1" height="1" fill="#b0b0b0"/>
<rect x="555" y="427" width="1" height="1" fill="#c0c0c0"/>
<rect x="562" y="431" width="1" height="1" fill="#30b0c8"/>
<rect x="559" y="431" width="1" height="2" fill="#888888"/>
<rect x="560" y="429" width="1" height="2" fill="#888888"/>
<rect x="562" y="432" width="1" height="2" fill="#8070c0"/>
<rect x="561" y="431" width="1" height="1" fill="#b0b0b0"/>
<rect x="562" y="431" width="1" height="1" fill="#3868c0"/>
<rect x="566" y="433" width="1" height="1" fill="#30b0c8"/>
<rect x="565" y="431" width="1" height="1" fill="#989898"/>
<rect x="568" y="432" width="1" height="1" fill="#989898"/>
<rect x="566" y="432" width="1" height="1" fill="#30b0c8"/>
<rect x="568" y="432" width="1" height="1" fill="#b0b0b0"/>
<rect x="566" y="432" width="1" height="2" fill="#e06088"/>
<rect x="563" y="431" width="1" height="1" fill="#a0a0a0"/>
<rect x="568" y="433" width="1" height="1" fill="#b0b0b0"/>
<rect x="545" y="422" width="1" height="2" fill="#b0b0b0"/>
<rect x="548" y="422" width="1" height="1" fill="#40d0b8"/>
<rect x="547" y="422" width="1" height="1" fill="#40d0b8"/>
<rect x="548" y="422" width="1" height="2" fill="#f0d058"/>
<rect x="486" y="399" width="1" height="1" fill="#2888c8"/>
<rect x="485" y="397" width="1" height="2" fill="#68e078"/>
<rect x="485" y="401" width="1" height="1" fill="#40d0b8"/>
<rect x="484" y="400" width="1" height="1" fill="#888888"/>
<rect x="497" y="407" width="1" height="1" fill="#ffffff"/>
<rect x="496" y="404" width="1" height="2" fill="#40d0b8"/>
<rect x="494" y="402" width="1" height="2" fill="#989898"/>
<rect x="495" y="403" width="1" height="2" fill="#50e098"/>
<rect x="494" y="403" width="1" height="2" fill="#c0c0c0"/>
<rect x="495" y="403" width="1" height="2" fill="#50e098"/>
<rect x="493" y="408" width="1" height="2" fill="#f080b8"/>
<rect x="495" y="408" width="1" height="1" fill="#f8a850"/>
<rect x="496" y="406" width="1" height="1" fill="#40d0b8"/>
<rect x="494" y="407" width="1" height="1" fill="#30b0c8"/>
<rect x="497" y="414" width="1" height="1" fill="#68e078"/>
<rect x="500" y="413" width="1" height="1" fill="#a0a0a0"/>
<rect x="496" y="411" width="1" height="2" fill="#b0b0b0"/>
<rect x="499" y="412" width="1" height="1" fill="#888888"/>
<rect x="511" y="424" width="1" height="1" fill="#a0a0a0"/>
<rect x="510" y="426" width="1" height="1" fill="#2888c8"/>
<rect x="512" y="424" width="1" height="2" fill="#b0b0b0"/>
<rect x="511" y="423" width="1" height="2" fill="#606060"/>
<rect x="512" y="426" width="1" height="1" fill="#888888"/>
<rect x="512" y="424" width="1" height="2" fill="#888888"/>
<rect x="510" y="425" width="1" height="2" fill="#f0d058"/>
<rect x="510" y="424" width="1" height="2" fill="#c0c0c0"/>
<rect x="527" y="421" width="1" height="1" fill="#ffffff"/>
<rect x="526" y="421" width="1" height="1" fill="#8070c0"/>
<rect x="527" y="420" width="1" height="1" fill="#30b0c8"/>
<rect x="526" y="418" width="1" height="1" fill="#a0a0a0"/>
<rect x="536" y="423" width="1" height="1" fill="#50e098"/>
<rect x="533" y="423" width="1" height="1" fill="#989898"/>
<rect x="534" y="423" width="1" height="1" fill="#707070"/>
<rect x="535" y="422" width="1" height="1" fill="#b0b0b0"/>
<rect x="541" y="411" width="1" height="1" fill="#989898"/>
<rect x="543" y="412" width="1" height="1" fill="#606060"/>
<rect x="497" y="432" width="1" height="1" fill="#30b0c8"/>
<rect x="497" y="433" width="1" height="1" fill="#c0c0c0"/>
<rect x="484" y="399" width="1" height="1" fill="#888888"/>
<rect x="486" y="400" width="1" height="2" fill="#888888"/>
<rect x="484" y="400" width="1" height="1" fill="#f05030"/>
<rect x="485" y="400" width="1" height="1" fill="#888888"/>
<rect x="497" y="405" width="1" height="1" fill="#e06088"/>
<rect x="493" y="405" width="1" height="1" fill="#f080b8"/>
<rect x="494" y="406" width="1" height="1" fill="#f05030"/>
<rect x="495" y="404" width="1" height="2" fill="#b0b0b0"/>
<rect x="496" y="404" width="1" height="1" fill="#989898"/>
<rect x="494" y="404" width="1" height="2" fill="#606060"/>
<rect x="477" y="406" width="1" height="2" fill="#a0a0a0"/>
<rect x="475" y="406" width="1" height="1" fill="#2888c8"/>
<rect x="499" y="411" width="1" height="2" fill="#606060"/>
<rect x="500" y="411" width="1" height="1" fill="#c0c0c0"/>
<rect x="498" y="409" width="1" height="2" fill="#989898"/>
<rect x="500" y="410" width="1" height="1" fill="#989898"/>
<rect x="378" y="409" width="1" height="1" fill="#30b0c8"/>
<rect x="379" y="409" width="1" height="1" fill="#e06088"/>
<rect x="417" y="411" width="1" height="2" fill="#50e098"/>
<rect x="417" y="410" width="1" height="2" fill="#c0c0c0"/>
<rect x="415" y="409" width="1" height="1" fill="#888888"/>
<rect x="416" y="408" width="1" height="1" fill="#40d0b8"/>
<rect x="363" y="407" width="1" height="2" fill="#989898"/>
<rect x="362" y="409" width="1" height="1" fill="#30b0c8"/>
<rect x="390" y="413" width="1" height="1" fill="#707070"/>
<rect x="391" y="413" width="1" height="1" fill="#707070"/>
<rect x="389" y="412" width="1" height="2" fill="#ffffff"/>
<rect x="392" y="415" width="1" height="1" fill="#989898"/>
<rect x="351" y="508" width="1" height="2" fill="#30b0c8"/>
<rect x="350" y="506" width="1" height="2" fill="#a0a0a0"/>
<rect x="653" y="454" width="1" height="1" fill="#b0b0b0"/>
<rect x="654" y="452" width="1" height="2" fill="#b0b0b0"/>
<rect x="655" y="451" width="1" height="2" fill="#a0a0a0"/>
<rect x="655" y="450" width="1" height="2" fill="#c0c0c0"/>
<rect x="656" y="455" width="1" height="1" fill="#606060"/>
<rect x="655" y="458" width="1" height="2" fill="#b0b0b0"/>
<rect x="654" y="455" width="1" height="1" fill="#888888"/>
<rect x="655" y="455" width="1" height="1" fill="#f8a850"/>
</g>
<g fill="none" stroke="#ff0000" stroke-width="1" stroke-linejoin="round" shape-rendering="crispEdges">
<path d="M529.5 0 L529.5 12.5 L536.5 12.5 L536.5 43 L537.5 43 L537.5 89.5 L544.5 89.5 L544.5 166.5 L570.5 166.5 L570.5 205.5 L592.5 205.5 L592.5 243.5 L848 243.5"/>
<path d="M815.5 0 L818 7 L830.7 16 L839.5 24 L850 33.8 L855.5 36.4 L864.4 35.5 L868 37 L878.7 33 L891 32 L900 32.4"/>
<path d="M645.5 777.8 L650 783 L652 786.5 L705.5 786.5 L710 775.5 L716.7 765.5 L727.8 759 L741 752 L752 749 L762.5 746.7 L763.5 764.5 L790.5 764.5 L791.5 783.5 L848 783.5"/>
<path d="M887 810 L890 883 L885 887"/>
<path d="M302 319 L300 312 L295 303 L297 295 L301 286 L306 278 L306.5 283 L303 291 L299 300 L301 309 L302 319"/>
<path d="M351.3 271.7 L354.7 270 L361.3 272.3 L370.7 275 L376 279.7 L380.7 285 L382.7 291 L380.7 296.3 L384 299 L388 301.7 L392 304.3 L396 308.3 L399.3 309 L398.7 306.3 L396.7 305.7 L396.7 299.7 L398.7 298.3 L406.7 298.3 L412.7 300.3 L414 304.3 L416 305.4 L423.3 303.3 L423.3 301 L428 302.3 L430.7 305 L438 303.7 L438.7 294.3 L442 295 L446 299.7 L442 297.7 L441.3 303 L442 307.7 L438 310.3 L436 308.3 L435.3 313 L428 316.3 L423.3 321 L420 325.7 L416.7 330.3 L409.3 327 L408.7 324.3 L402.7 323 L398 320.3 L395.3 315.7 L392 311 L389.3 307 L386.7 303 L381.3 297.7"/>
<path d="M352.7 282.3 L360 282.3 L366.7 284.3 L368.7 286.3 L373.3 289.4 L380 289"/>
<path d="M303 256.7 L316.7 259 L330 262 L321 266.7"/>
<path d="M499 2 L496.7 4 L492.7 8 L487.3 12 L482 17.3 L480.7 22 L476.7 24 L476 28.7 L474.7 32 L472.7 28.7 L472 24 L474 22 L470 20.7 L463.3 20.3 L456.7 23.3 L446 24 L442 25.5 L431 31 L420 38 L411 43 L407 49 L400 58 L398 65.5 L401 71 L409 70 L418 72 L423 77 L427 81 L433 87 L427 87 L424 90 L418 92 L411 95 L402 94 L393 92 L382 93 L375.5 88 L373 83 L367 79 L362 79 L351 85.5 L340 91 L327 100 L313 111 L315.5 120 L309 123 L307 118 L302 121 L300 120"/>
<path d="M300 127 L305.5 131 L304 135.5 L300 139 L296 137 L297 130 L300 127"/>
<path d="M271 143 L276.7 149 L283 151 L292 146.7 L299 140 L305.5 133 L303 129 L296.7 125.5 L301 121 L310 123 L314.5 120 L310 116.7 L315.5 113"/>
<path d="M253 160 L248 163 L241 164.5 L243 169 L249 171 L248 178 L241 182 L230 182 L221 182 L218 189 L210 195.5 L201 200 L196.7 198 L198 189 L205.5 182 L215 176 L226 172"/>
<path d="M226.7 173 L230 176.7 L233 169"/>
<path d="M751.5 38 L749.8 42.7 L753 48 L754 57 L760.4 57 L756 53 L755 47 L752 42"/>
<path d="M757.8 65.8 L762 68.4 L761 70 L757.8 65.8"/>
<path d="M829 72 L828 80 L830.7 83.5 L827 89 L820 94 L823.5 103 L822 96 L829 90.7 L832.4 83.5 L834 76.4"/>
<path d="M547 75.3 L550 75 L553.3 75.5 L557.3 75 L558 71 L560 70 L566.7 69 L572 68"/>
<path d="M547 76.3 L552 76.5 L557 76.2"/>
<path d="M574.7 74.3 L576.3 76.3 L576 78.7"/>
<path d="M559.3 74 L563.3 72.7 L568 73 L569.3 76.3 L568.7 78.7 L565.3 77 L562 75.7 L559.3 74"/>
<path d="M585 30 L585.5 33"/>
<path d="M689 110 L687 116 L684 116 L684 109"/>
<path d="M757 112 L756 119 L757 124 L764 124 L768 121 L764 117 L765 112"/>
<path d="M837 358 L840.7 354 L846 356 L845 366.7"/>
<path d="M783 375.5 L785.5 382 L790 384.5 L793 388"/>
<path d="M816.7 455.6 L816.7 464.5 L812 470 L812 478 L814 471.6 L821 469"/>
<path d="M833.6 471.6 L844 470.7"/>
<path d="M836 531 L838 534 L836 537 L836 531"/>
<path d="M524.5 769 L536.7 770 L543 775.5 L547.8 782 L554.5 789 L560 793 L561 800 L567.8 804.5 L569 815.5 L571 824.5 L576.7 833 L583 842 L586.7 853 L585.5 864.5 L581 873 L585.5 877.8 L591 884.5 L594.5 888"/>
<path d="M525.5 774.5 L534.5 777.8 L543 781 L549 786 L556 792 L558.5 800 L565 806 L566.5 816 L568.5 826 L574 835 L580 844 L584 854 L582.5 864 L578 873 L583 880 L588 888"/>
<path d="M569 806.7 L576.7 804.5 L584.5 803"/>
<path d="M534.5 777.8 L534.5 783"/>
<path d="M623 762 L619 771 L610 777.8 L603 783 L600 787.8"/>
<path d="M492 829 L501 830 L510 833 L513 840 L521 836.7 L528 835"/>
<path d="M499 877.8 L510 869 L519 857.8 L525.5 849 L532 842 L539 842 L543 851 L550 853 L559 847.8 L567.8 853 L574.5 862 L581 873"/>
<path d="M499 880 L511 871.5 L520.5 860 L527 851.5 L532.5 845 L537.5 845 L541.5 853.5 L550 856 L559 850.5 L566 855.5 L572.5 864 L578 873"/>
<path d="M479 868 L477 873 L478 879 L481 882 L482.5 877 L481 871 L479 868"/>
<path d="M489 861 L486 865 L487 871 L491 874 L494.5 871 L494 865 L489 861"/>
<path d="M489 864 L488.5 869 L491 871.5 L492.5 868 L489 864"/>
<path d="M479 886 L484 883.5 L490 882 L493 882.5 L488 885 L481 887.5"/>
<path d="M516.7 765.5 L519 762 L521 767.8 L517.8 770 L516.7 765.5"/>
<path d="M761 691 L770 686.7"/>
<path d="M745.5 665.5 L751 666.7 L749 672"/>
<path d="M769 673 L776.7 675.5 L773 680"/>
<path d="M91 771 L96 766.7"/>
<path d="M23 703 L31 708 L38 709 L34 705"/>
<path d="M45 747 L55 743 L62 742 L63 746"/>
<path d="M116 170 L119 169 L121 173 L118 175 L116 173 L116 170"/>
<path d="M481 448.7 L484.5 445 L488 450.5 L484.5 455.8 L491.5 454 L500.5 448.7 L511 447.8 L518 445"/>
<path d="M488 457.5 L495 459 L502 457.5 L510 453"/>
<path d="M361 452 L364 452 L364 457 L362 458 L361 452"/>
<path d="M492 831.5 L501 832.5 L508.5 835.5 L512 842.5 L521 839 L528 837"/>
<circle cx="133" cy="201" r="11"/>
<circle cx="189" cy="345" r="14.5"/>
<circle cx="801" cy="652" r="11.8"/>
<circle cx="0" cy="779" r="5"/>
</g>
<g fill="none" stroke="#e80000" stroke-width="3.9" stroke-linejoin="round" stroke-linecap="round" shape-rendering="crispEdges">
<path d="M-2 48.5 L5.3 52 L10.7 57.3 L14 64 L15.7 72.7 L16.7 77.3 L22.7 80 L32 79.6 L40 80 L48 82.3 L53.3 86 L56 92.7 L56 99.3 L52.7 107.3 L49.3 113.3 L46 116 L40 114 L34.7 110.7 L29.3 107.6 L20 107.6 L13.3 111.3 L8 116 L4 122 L-2 128.5" stroke-width="3.4"/>
<path d="M500 0 L478 9 L455.5 18 L433 29 L411 41 L389 54 L367 69 L344 83 L322 98" stroke-width="4.6"/>
<path d="M322 98 L305.5 112 L288 125.5 L270 140 L250 154.5 L234.5 163 L216.7 171 L201 179 L193 185.5 L190 195.5 L193 209 L198 214.5 L210 219 L221 226.7 L234.5 236.7 L245.5 245.5 L259 252 L274.5 253 L288 254.5 L301 260 L314.5 265.5 L323 268 L334.5 265.5 L343 270 L349 275.5 L351 279 L346 284 L341 290 L341 299 L337 307 L328 313 L314 318 L302 319" stroke-width="3.8"/>
<path d="M302 319 L312 328 L318 339 L330 351 L341 361 L347 374 L339 386 L341 406 L348 421 L359 430" stroke-width="3.9"/>
<path d="M359 430 L373 435 L400 443 L433 452 L460 460 L482 466 L493 463 L513 452" stroke-width="5.0"/>
<path d="M513 452 L533 440 L547 437 L567 438 L587 435 L590 435.5" stroke-width="4.2"/>
<path d="M590 435.5 L603 437 L616.7 439 L628 444.5 L639 453 L645.5 461 L652 472 L661 472 L660.7 460 L664.5 450 L666.7 437 L663 431 L656.7 426.7 L656 419 L648 421 L634.5 427 L638 434.5 L645.5 442 L654.5 448 L664.5 450" stroke-width="3.5"/>
<path d="M666.7 441 L679 449 L686.7 455.5 L688 466.7 L691 478 L692.7 490 L699 484.5 L705.5 478 L707.8 466.7 L710 453 L715.5 444.5 L727.8 433 L743 420 L747.8 412 L759 409 L771 406 L776.7 397 L785.6 391.6 L793.6 388 L801.6 392.5 L808.7 396 L815.8 393.4 L821 386 L826.5 375.6 L833.6 368.3 L842.5 360.5 L848 357.7" stroke-width="3.4"/>
<path d="M848 452.5 L839 450 L830 446 L823 444 L818.5 446.7 L817.6 454 L820 461 L824.7 468 L833.6 475 L840.7 482 L848 489.5" stroke-width="3.6"/>
<path d="M588 -2 L589 6.7 L586.7 16 L581 23 L577.6 28.7 L577 40 L578 48 L580 52 L577 60 L573 69 L573 76 L577 84 L582.7 93 L586.7 101 L589 104 L600 103 L608 100.7 L616 98.7 L624 100 L631 102.5 L640 103.4 L652.4 103 L660.2 98.8 L671 98.8 L679.7 96.4 L689.8 108 L702 107.3 L710 107.3 L716.2 110 L724 108 L735 100.3 L745.8 105 L759.8 112 L769 102.7 L775.6 89 L782.7 69 L786 62 L793 59.5 L802 60.4 L808.4 68.4 L818 70 L829 68.4 L836 73" stroke-width="3.8"/>
<path d="M836 71 L834 62 L827 50 L818 42.7 L805.8 36.4 L793 31 L782.7 29 L770 31 L757.8 35.5 L753 34.7 L754 21 L753 9 L750.7 -2" stroke-width="3.8"/>
<path d="M752 -2 L763 9 L772 15 L781.8 19.5 L791.5 15 L800.4 7 L806.5 -2" stroke-width="3.8"/>
<path d="M787 -1 L797 2 L805 -1" stroke-width="3.8"/>
<path d="M-2 691 L6.7 690.7 L14.7 689 L18.7 694.7 L22.7 700 L28 703 L40 706.7 L53 709 L66.7 710 L84 711 L93 714 L109 721 L105 733 L100 742.7 L94.7 752 L86.7 752.7 L78.7 748.7 L66.7 747 L53 748 L42.7 750.7 L34 753 L32.7 762 L26.7 766.7 L20 773 L18 780 L20 789 L14.7 793 L8 798.7 L-2 796" stroke-width="3.4"/>
<path d="M497.8 890 L496.7 873 L494.5 855.5 L494 838 L495 820 L497.8 804.5 L503 789" stroke-width="3.5"/>
<path d="M503 789 L511 780 L521 774.5 L524.5 767.8 L520 760 L527.8 747.8 L539 737.8 L554.5 731 L572 728.5 L590 732 L603 739 L609 747.8 L612 755.5 L623 761 L632 764.5 L635.5 773 L645.5 777 L650 777.8 L661 775.5 L675.5 772 L685.5 762 L695.5 751 L697.8 740 L714.5 734.5 L723 720 L734.5 702 L743 684.5 L750 674.5 L759 671 L767.8 675.5 L771 685.5 L774.5 687.8 L785.5 685.5 L799 685.5 L807.8 682 L819 684.5 L834.5 683 L848 680" stroke-width="4.0"/>
<path d="M704.5 657 L714.5 647.8 L723 646 L733 644.5 L739 650 L742 662 L734.5 664.5 L721 665.5 L712 662.7 L704.5 657" stroke-width="4.0"/>
</g>
<g fill="none" stroke="#ffa87c" stroke-width="1" shape-rendering="crispEdges">
<path d="M472.8 81.0 L480.2 81.6 L487.6 82.3 L495.0 83.2 L502.4 84.2 L509.8 85.4 L517.1 86.7 L524.4 88.2 L531.7 89.8 L538.9 91.6 L546.1 93.6 L553.3 95.7 L560.4 97.9 L567.5 100.3 L574.5 102.8 L581.5 105.5 L588.4 108.3 L595.3 111.3 L602.1 114.4 L608.9 117.6 L615.6 121.0 L622.2 124.6 L628.7 128.2 L635.2 132.0 L641.6 136.0 L647.9 140.0 L654.2 144.2 L660.3 148.6 L666.4 153.0 L672.4 157.6 L678.3 162.3 L684.1 167.1 L689.8 172.1 L695.4 177.1 L700.9 182.3 L706.3 187.6 L711.6 193.0 L716.8 198.5 L721.9 204.1 L726.9 209.8 L731.8 215.6 L736.6 221.6 L741.2 227.6 L745.7 233.7 L750.2 239.9 L754.4 246.2 L758.6 252.5 L762.7 259.0 L766.6 265.5 L770.4 272.1 L774.0 278.8 L777.6 285.6 L781.0 292.4 L784.2 299.3 L787.4 306.2 L790.4 313.3 L793.2 320.3 L795.9 327.5 L798.5 334.6 L801.0 341.9 L803.2 349.2 L805.4 356.5 L807.4 363.8 L809.3 371.2 L811.0 378.6 L812.6 386.1 L814.0 393.6 L815.3 401.1 L816.4 408.6 L817.4 416.2 L818.2 423.7 L818.9 431.3 L819.4 438.9 L819.8 446.4 L820.0 454.0 L820.1 461.6 L820.0 469.2 L819.8 476.8 L819.4 484.3 L818.8 491.9 L818.1 499.4 L817.3 506.9 L816.3 514.4 L815.1 521.8 L813.8 529.2 L812.3 536.6 L810.7 544.0 L808.9 551.3 L807.0 558.6 L804.9 565.8 L802.7 573.0 L800.3 580.1 L797.8 587.2 L795.1 594.2 L792.3 601.1 L789.3 608.0 L786.1 614.8 L782.9 621.6 L779.4 628.3 L775.9 634.9 L772.2 641.4 L768.3 647.8 L764.3 654.2 L760.2 660.5 L755.9 666.7 L751.5 672.8 L747.0 678.8 L742.3 684.7 L737.5 690.5 L732.6 696.2 L727.5 701.8 L722.3 707.3 L717.0 712.7 L711.6 718.0 L706.0 723.1 L700.3 728.2 L694.5 733.1 L688.6 737.9 L682.6 742.6 L676.5 747.2 L670.3 751.6 L664.0 755.9 L657.5 760.1 L651.0 764.2 L644.4 768.1 L637.7 771.9 L630.9 775.6 L624.0 779.1 L617.0 782.5 L610.0 785.7 L602.9 788.8 L595.7 791.7 L588.4 794.6 L581.1 797.2 L573.7 799.7 L566.2 802.1 L558.7 804.3 L551.2 806.4 L543.6 808.3 L535.9 810.1 L528.2 811.7 L520.5 813.2 L512.7 814.5 L504.9 815.7 L497.1 816.7 L489.3 817.6 L481.4 818.3 L473.5 818.8 L465.6 819.2 L457.7 819.4 L449.8 819.5 L441.9 819.4 L434.0 819.2 L426.1 818.8 L418.2 818.3 L410.4 817.6 L402.5 816.7 L394.7 815.7 L386.9 814.6 L379.1 813.2 L371.4 811.8 L363.7 810.2 L356.1 808.4 L348.5 806.5 L340.9 804.4 L333.4 802.2 L325.9 799.8 L318.5 797.3 L311.2 794.6 L304.0 791.8 L296.8 788.9 L289.6 785.8 L282.6 782.5 L275.6 779.1 L268.7 775.6 L261.9 772.0 L255.2 768.2 L248.6 764.3 L242.1 760.2 L235.6 756.0 L229.3 751.7 L223.1 747.3 L217.0 742.7 L211.0 738.0 L205.0 733.2 L199.3 728.3 L193.6 723.2 L188.0 718.1 L182.6 712.8 L177.3 707.4 L172.1 701.9 L167.0 696.3 L162.1 690.6 L157.3 684.8 L152.6 678.9 L148.0 672.9 L143.6 666.8 L139.4 660.6 L135.2 654.3 L131.2 648.0 L127.4 641.5 L123.7 635.0 L120.1 628.4 L116.7 621.7 L113.4 615.0 L110.3 608.2 L107.3 601.3 L104.4 594.3 L101.7 587.3 L99.2 580.3 L96.8 573.1 L94.6 566.0 L92.5 558.7 L90.6 551.5 L88.8 544.1 L87.2 536.8 L85.7 529.4 L84.4 522.0 L83.2 514.5 L82.2 507.1 L81.3 499.5 L80.6 492.0 L80.1 484.5 L79.7 476.9 L79.5 469.4 L79.4 461.8 L79.4 454.2 L79.7 446.6 L80.0 439.0 L80.6 431.5 L81.2 423.9 L82.1 416.3 L83.0 408.8 L84.2 401.3 L85.4 393.7 L86.9 386.3 L88.4 378.8 L90.1 371.4 L92.0 364.0 L94.0 356.6 L96.2 349.3 L98.5 342.0 L100.9 334.8 L103.5 327.6 L106.2 320.5 L109.0 313.4 L112.0 306.4 L115.2 299.4 L118.4 292.5 L121.8 285.7 L125.4 279.0 L129.0 272.3 L132.8 265.7 L136.7 259.1 L140.8 252.7 L144.9 246.3 L149.2 240.0 L153.6 233.8 L158.1 227.7 L162.8 221.7 L167.6 215.8 L172.4 210.0 L177.4 204.2 L182.5 198.6 L187.7 193.1 L193.0 187.7 L198.4 182.4 L203.9 177.2 L209.5 172.2 L215.3 167.2 L221.1 162.4 L227.0 157.7 L232.9 153.1 L239.0 148.7 L245.2 144.3 L251.4 140.1 L257.7 136.1 L264.1 132.1 L270.6 128.3 L277.1 124.6 L283.8 121.1 L290.4 117.7 L297.2 114.5 L304.0 111.3 L310.9 108.4 L317.8 105.5 L324.8 102.9 L331.8 100.3 L338.9 97.9 L346.0 95.7 L353.2 93.6 L360.4 91.7 L367.6 89.9 L374.9 88.2 L382.2 86.7 L389.5 85.4 L396.9 84.2 L404.3 83.2 L411.7 82.3 L419.1 81.6 L426.5 81.0"/>
<path d="M470.5 266.3 L474.2 266.8 L477.8 267.3 L481.5 267.9 L485.1 268.6 L488.7 269.3 L492.3 270.2 L495.9 271.1 L499.4 272.1 L503.0 273.1 L506.5 274.2 L510.0 275.4 L513.5 276.7 L516.9 278.0 L520.4 279.4 L523.7 280.9 L527.1 282.4 L530.5 284.0 L533.8 285.7 L537.0 287.5 L540.3 289.3 L543.5 291.2 L546.6 293.1 L549.8 295.1 L552.8 297.2 L555.9 299.3 L558.9 301.5 L561.8 303.8 L564.8 306.1 L567.6 308.4 L570.5 310.9 L573.2 313.3 L576.0 315.9 L578.6 318.5 L581.3 321.1 L583.8 323.8 L586.4 326.6 L588.8 329.4 L591.2 332.2 L593.6 335.1 L595.9 338.1 L598.1 341.1 L600.3 344.1 L602.4 347.2 L604.5 350.3 L606.5 353.5 L608.4 356.7 L610.3 359.9 L612.1 363.2 L613.9 366.5 L615.5 369.8 L617.2 373.2 L618.7 376.6 L620.2 380.1 L621.6 383.5 L622.9 387.0 L624.2 390.5 L625.4 394.1 L626.5 397.6 L627.6 401.2 L628.6 404.8 L629.5 408.5 L630.4 412.1 L631.1 415.8 L631.8 419.4 L632.5 423.1 L633.0 426.8 L633.5 430.5 L633.9 434.2 L634.3 437.9 L634.5 441.7 L634.7 445.4 L634.8 449.1 L634.8 452.8 L634.8 456.6 L634.7 460.3 L634.5 464.0 L634.2 467.7 L633.9 471.4 L633.5 475.1 L633.0 478.8 L632.4 482.5 L631.8 486.2 L631.1 489.8 L630.3 493.4 L629.4 497.1 L628.5 500.7 L627.5 504.2 L626.4 507.8 L625.2 511.3 L624.0 514.8 L622.7 518.3 L621.3 521.7 L619.9 525.2 L618.4 528.6 L616.8 531.9 L615.1 535.2 L613.4 538.5 L611.6 541.8 L609.8 545.0 L607.9 548.2 L605.9 551.3 L603.8 554.4 L601.7 557.5 L599.5 560.5 L597.3 563.4 L595.0 566.4 L592.6 569.2 L590.2 572.1 L587.7 574.8 L585.1 577.5 L582.5 580.2 L579.9 582.8 L577.2 585.4 L574.4 587.9 L571.6 590.4 L568.7 592.8 L565.8 595.1 L562.8 597.4 L559.8 599.6 L556.7 601.7 L553.6 603.8 L550.5 605.9 L547.3 607.8 L544.0 609.7 L540.7 611.6 L537.4 613.3 L534.1 615.1 L530.7 616.7 L527.3 618.3 L523.8 619.8 L520.3 621.2 L516.8 622.6 L513.2 623.9 L509.7 625.1 L506.0 626.2 L502.4 627.3 L498.8 628.3 L495.1 629.3 L491.4 630.1 L487.7 630.9 L484.0 631.6 L480.2 632.3 L476.5 632.8 L472.7 633.3 L468.9 633.7 L465.2 634.1 L461.4 634.4 L457.6 634.5 L453.8 634.7 L450.0 634.7 L446.2 634.7 L442.4 634.6 L438.6 634.4 L434.8 634.1 L431.0 633.8 L427.2 633.4 L423.5 632.9 L419.7 632.3 L416.0 631.7 L412.2 631.0 L408.5 630.2 L404.8 629.4 L401.2 628.4 L397.5 627.4 L393.9 626.4 L390.3 625.2 L386.7 624.0 L383.1 622.7 L379.6 621.4 L376.1 620.0 L372.6 618.5 L369.2 616.9 L365.8 615.3 L362.5 613.6 L359.1 611.8 L355.8 610.0 L352.6 608.1 L349.4 606.1 L346.2 604.1 L343.1 602.0 L340.0 599.9 L337.0 597.6 L334.0 595.4 L331.1 593.0 L328.2 590.7 L325.4 588.2 L322.6 585.7 L319.9 583.2 L317.3 580.5 L314.7 577.9 L312.1 575.2 L309.6 572.4 L307.2 569.6 L304.8 566.7 L302.5 563.8 L300.2 560.8 L298.0 557.8 L295.9 554.8 L293.9 551.7 L291.9 548.6 L289.9 545.4 L288.1 542.2 L286.3 538.9 L284.5 535.7 L282.9 532.3 L281.3 529.0 L279.8 525.6 L278.3 522.2 L276.9 518.7 L275.6 515.3 L274.4 511.8 L273.2 508.2 L272.1 504.7 L271.1 501.1 L270.2 497.5 L269.3 493.9 L268.5 490.3 L267.8 486.6 L267.1 483.0 L266.5 479.3 L266.0 475.6 L265.6 471.9 L265.3 468.2 L265.0 464.5 L264.8 460.8 L264.7 457.0 L264.6 453.3 L264.6 449.6 L264.7 445.9 L264.9 442.1 L265.2 438.4 L265.5 434.7 L265.9 431.0 L266.4 427.3 L266.9 423.6 L267.5 419.9 L268.2 416.2 L269.0 412.6 L269.8 408.9 L270.7 405.3 L271.7 401.7 L272.8 398.1 L273.9 394.5 L275.1 391.0 L276.4 387.5 L277.7 384.0 L279.1 380.5 L280.6 377.0 L282.1 373.6 L283.7 370.3 L285.4 366.9 L287.1 363.6 L288.9 360.3 L290.8 357.1 L292.7 353.9 L294.7 350.7 L296.8 347.6 L298.9 344.5 L301.1 341.4 L303.3 338.5 L305.6 335.5 L307.9 332.6 L310.3 329.7 L312.8 326.9 L315.3 324.2 L317.9 321.5 L320.5 318.8 L323.2 316.2 L325.9 313.7 L328.6 311.2 L331.5 308.7 L334.3 306.4 L337.2 304.0 L340.2 301.8 L343.2 299.6 L346.2 297.4 L349.3 295.4 L352.4 293.4 L355.6 291.4 L358.8 289.5 L362.0 287.7 L365.3 285.9 L368.6 284.3 L371.9 282.6 L375.3 281.1 L378.7 279.6 L382.1 278.2 L385.5 276.8 L389.0 275.6 L392.5 274.4 L396.0 273.2 L399.6 272.2 L403.1 271.2 L406.7 270.3 L410.3 269.4 L413.9 268.7 L417.6 268.0 L421.2 267.4 L424.8 266.8 L428.5 266.3"/>
</g>
<rect x="846" y="40" width="54" height="768" fill="#000"/>
<rect x="0" y="888" width="900" height="12" fill="#000"/>
<text x="428.7" y="83" class="ring" textLength="42.3" lengthAdjust="spacingAndGlyphs">100 NMI</text>
<text x="431" y="268.2" class="ring" textLength="36.3" lengthAdjust="spacingAndGlyphs">50 NMI</text>
<g shape-rendering="crispEdges">
<rect x="875" y="89" width="17" height="6" fill="#831585"/>
<rect x="875" y="95" width="17" height="6" fill="#881c8c"/>
<rect x="875" y="101" width="17" height="6" fill="#913098"/>
<rect x="875" y="107" width="17" height="6" fill="#9f4fa7"/>
<rect x="875" y="113" width="17" height="6" fill="#b478bc"/>
<rect x="875" y="119" width="17" height="6" fill="#c79dce"/>
<rect x="875" y="125" width="17" height="5" fill="#d8badd"/>
<rect x="875" y="130" width="17" height="6" fill="#e6d4e8"/>
<rect x="875" y="136" width="17" height="6" fill="#f2ebf2"/>
<rect x="875" y="142" width="17" height="6" fill="#f9f6f9"/>
<rect x="875" y="148" width="17" height="6" fill="#fffdfe"/>
<rect x="875" y="154" width="17" height="6" fill="#fff5fa"/>
<rect x="875" y="160" width="17" height="6" fill="#ffeaf5"/>
<rect x="875" y="166" width="17" height="6" fill="#fdd9ea"/>
<rect x="875" y="172" width="17" height="6" fill="#fcc8e0"/>
<rect x="875" y="178" width="17" height="6" fill="#fab4d6"/>
<rect x="875" y="184" width="17" height="6" fill="#f9a0cc"/>
<rect x="875" y="190" width="17" height="6" fill="#f691c3"/>
<rect x="875" y="196" width="17" height="5" fill="#f285bb"/>
<rect x="875" y="201" width="17" height="6" fill="#eb77aa"/>
<rect x="875" y="207" width="17" height="6" fill="#e36692"/>
<rect x="875" y="213" width="17" height="6" fill="#db567b"/>
<rect x="875" y="219" width="17" height="6" fill="#d34566"/>
<rect x="875" y="225" width="17" height="6" fill="#c9324c"/>
<rect x="875" y="231" width="17" height="6" fill="#c01f2f"/>
<rect x="875" y="237" width="17" height="6" fill="#bb1520"/>
<rect x="875" y="243" width="17" height="6" fill="#b50d13"/>
<rect x="875" y="249" width="17" height="6" fill="#b00808"/>
<rect x="875" y="255" width="17" height="6" fill="#c80101"/>
<rect x="875" y="261" width="17" height="6" fill="#cd0000"/>
<rect x="875" y="267" width="17" height="6" fill="#cf0000"/>
<rect x="875" y="273" width="17" height="5" fill="#d00100"/>
<rect x="875" y="278" width="17" height="6" fill="#d50806"/>
<rect x="875" y="284" width="17" height="6" fill="#d90f0c"/>
<rect x="875" y="290" width="17" height="6" fill="#de1913"/>
<rect x="875" y="296" width="17" height="6" fill="#e4271b"/>
<rect x="875" y="302" width="17" height="6" fill="#ea3724"/>
<rect x="875" y="308" width="17" height="6" fill="#ef4c2e"/>
<rect x="875" y="314" width="17" height="6" fill="#f26838"/>
<rect x="875" y="320" width="17" height="6" fill="#f48542"/>
<rect x="875" y="326" width="17" height="6" fill="#f79e4c"/>
<rect x="875" y="332" width="17" height="6" fill="#f5b853"/>
<rect x="875" y="338" width="17" height="6" fill="#eed158"/>
<rect x="875" y="344" width="17" height="5" fill="#d5db58"/>
<rect x="875" y="349" width="17" height="6" fill="#bae05a"/>
<rect x="875" y="355" width="17" height="6" fill="#9be05f"/>
<rect x="875" y="361" width="17" height="6" fill="#7ce06e"/>
<rect x="875" y="367" width="17" height="6" fill="#64e07e"/>
<rect x="875" y="373" width="17" height="6" fill="#58e08e"/>
<rect x="875" y="379" width="17" height="6" fill="#4ddd9e"/>
<rect x="875" y="385" width="17" height="6" fill="#45d5ae"/>
<rect x="875" y="391" width="17" height="6" fill="#3dcabb"/>
<rect x="875" y="397" width="17" height="6" fill="#35b9c3"/>
<rect x="875" y="403" width="17" height="6" fill="#2ea5c8"/>
<rect x="875" y="409" width="17" height="6" fill="#298cc8"/>
<rect x="875" y="415" width="17" height="6" fill="#3077c4"/>
<rect x="875" y="421" width="17" height="5" fill="#3c65bf"/>
<rect x="875" y="426" width="17" height="6" fill="#4c5bb9"/>
<rect x="875" y="432" width="17" height="6" fill="#5e5cb8"/>
<rect x="875" y="438" width="17" height="6" fill="#7262b9"/>
<rect x="875" y="444" width="17" height="6" fill="#c6c6c6"/>
<rect x="875" y="450" width="17" height="6" fill="#c1c1c1"/>
<rect x="875" y="456" width="17" height="6" fill="#bbbbbb"/>
<rect x="875" y="462" width="17" height="6" fill="#b5b5b5"/>
<rect x="875" y="468" width="17" height="6" fill="#afafaf"/>
<rect x="875" y="474" width="17" height="6" fill="#aaaaaa"/>
<rect x="875" y="480" width="17" height="6" fill="#a4a4a4"/>
<rect x="875" y="486" width="17" height="6" fill="#9e9e9e"/>
<rect x="875" y="492" width="17" height="5" fill="#989898"/>
<rect x="875" y="497" width="17" height="6" fill="#939393"/>
<rect x="875" y="503" width="17" height="6" fill="#8d8d8d"/>
<rect x="875" y="509" width="17" height="6" fill="#878787"/>
<rect x="875" y="515" width="17" height="6" fill="#818181"/>
<rect x="875" y="521" width="17" height="6" fill="#7c7c7c"/>
<rect x="875" y="527" width="17" height="6" fill="#767676"/>
<rect x="875" y="533" width="17" height="6" fill="#707070"/>
<rect x="875" y="539" width="17" height="6" fill="#6a6a6a"/>
<rect x="875" y="545" width="17" height="6" fill="#646464"/>
<rect x="875" y="551" width="17" height="6" fill="#5f5f5f"/>
<rect x="875" y="557" width="17" height="6" fill="#595959"/>
<rect x="875" y="563" width="17" height="6" fill="#535353"/>
<rect x="875" y="569" width="17" height="5" fill="#4d4d4d"/>
<rect x="875" y="574" width="17" height="6" fill="#484848"/>
<rect x="875" y="580" width="17" height="6" fill="#424242"/>
<rect x="875" y="586" width="17" height="6" fill="#3c3c3c"/>
<rect x="875" y="592" width="17" height="6" fill="#363636"/>
<rect x="875" y="598" width="17" height="6" fill="#313131"/>
<rect x="875" y="604" width="17" height="6" fill="#2b2b2b"/>
<rect x="875" y="610" width="17" height="6" fill="#252525"/>
<rect x="875" y="616" width="17" height="6" fill="#1f1f1f"/>
<rect x="875" y="622" width="17" height="6" fill="#1a1a1a"/>
<rect x="875" y="628" width="17" height="6" fill="#141414"/>
<rect x="875" y="634" width="17" height="6" fill="#0e0e0e"/>
<rect x="875" y="640" width="17" height="5" fill="#080808"/>
<rect x="875" y="645" width="17" height="6" fill="#020202"/>
<rect x="875" y="651" width="17" height="6" fill="#000000"/>
<rect x="875" y="657" width="17" height="6" fill="#000000"/>
<rect x="875" y="663" width="17" height="6" fill="#000000"/>
<rect x="875" y="669" width="17" height="6" fill="#000000"/>
<rect x="875" y="675" width="17" height="6" fill="#000000"/>
<rect x="875" y="681" width="17" height="6" fill="#000000"/>
<rect x="875" y="687" width="17" height="6" fill="#000000"/>
<rect x="875" y="693" width="17" height="6" fill="#000000"/>
<rect x="875" y="699" width="17" height="6" fill="#000000"/>
<rect x="875" y="705" width="17" height="6" fill="#000000"/>
<rect x="875" y="711" width="17" height="6" fill="#000000"/>
<rect x="875" y="717" width="17" height="5" fill="#000000"/>
<rect x="875" y="722" width="17" height="6" fill="#000000"/>
<rect x="875" y="728" width="17" height="6" fill="#000000"/>
<rect x="875" y="734" width="17" height="6" fill="#000000"/>
<rect x="875" y="740" width="17" height="6" fill="#000000"/>
<rect x="875" y="746" width="17" height="6" fill="#000000"/>
<rect x="875" y="752" width="17" height="6" fill="#000000"/>
<rect x="875" y="758" width="17" height="6" fill="#000000"/>
<rect x="875" y="764" width="17" height="6" fill="#000000"/>
<rect x="875" y="770" width="17" height="6" fill="#000000"/>
<rect x="875" y="776" width="17" height="6" fill="#000000"/>
<rect x="875" y="782" width="17" height="6" fill="#000000"/>
<rect x="875" y="788" width="17" height="5" fill="#000000"/>
<rect x="875" y="793" width="17" height="6" fill="#000000"/>
<rect x="875" y="799" width="17" height="1" fill="#000000"/>
<rect x="873.5" y="87.5" width="20" height="714" fill="none" stroke="#900890" stroke-width="1"/>
</g>
<text x="866.3" y="117" text-anchor="end" class="lab">7</text>
<text x="866.3" y="161" text-anchor="end" class="lab">6</text>
<text x="866.3" y="206" text-anchor="end" class="lab">5</text>
<text x="866.3" y="250" text-anchor="end" class="lab">4</text>
<text x="866.3" y="295" text-anchor="end" class="lab">3</text>
<text x="866.3" y="339" text-anchor="end" class="lab">2</text>
<text x="866.3" y="383" text-anchor="end" class="lab">1</text>
<text x="866.3" y="428" text-anchor="end" class="lab">0</text>
<text x="866.3" y="472" text-anchor="end" class="lab">-1</text>
<text x="866.3" y="517" text-anchor="end" class="lab">-2</text>
<text x="866.3" y="561" text-anchor="end" class="lab">-3</text>
<text x="866.3" y="605" text-anchor="end" class="lab">-4</text>
<text x="866.3" y="650" text-anchor="end" class="lab">-5</text>
<text x="866.3" y="694" text-anchor="end" class="lab">-6</text>
<text x="866.3" y="739" text-anchor="end" class="lab">-7</text>
<text x="866.3" y="783" text-anchor="end" class="lab">TH</text>
<text x="868" y="63.8" class="lab" style="font-size:11.2px" textLength="22" lengthAdjust="spacingAndGlyphs">DZD</text>
<text x="840.5" y="73" class="lab" style="font-size:11.2px" textLength="27.5" lengthAdjust="spacingAndGlyphs">[dB]</text>
<text x="715" y="14.8" class="lab" style="font-size:10.8px" textLength="168" lengthAdjust="spacingAndGlyphs">NEXLAB-College of DuPage</text>
<g fill="none" stroke="#ffff00" stroke-width="1"><path d="M888.5 15 V6.5 H895.5 L890.5 10.5 L895.5 14.5 M895.5 12 V14.5 H893"/></g>
<text x="172" y="897" style="font-size:10.8px;fill:#f8f0f8" textLength="556" lengthAdjust="spacingAndGlyphs">DIFFERENTIAL REFLECTIVITY (ZDR) 0.5 DEG - KAEC 29 DEC 25 07:26</text>
</svg>
</body></html>
